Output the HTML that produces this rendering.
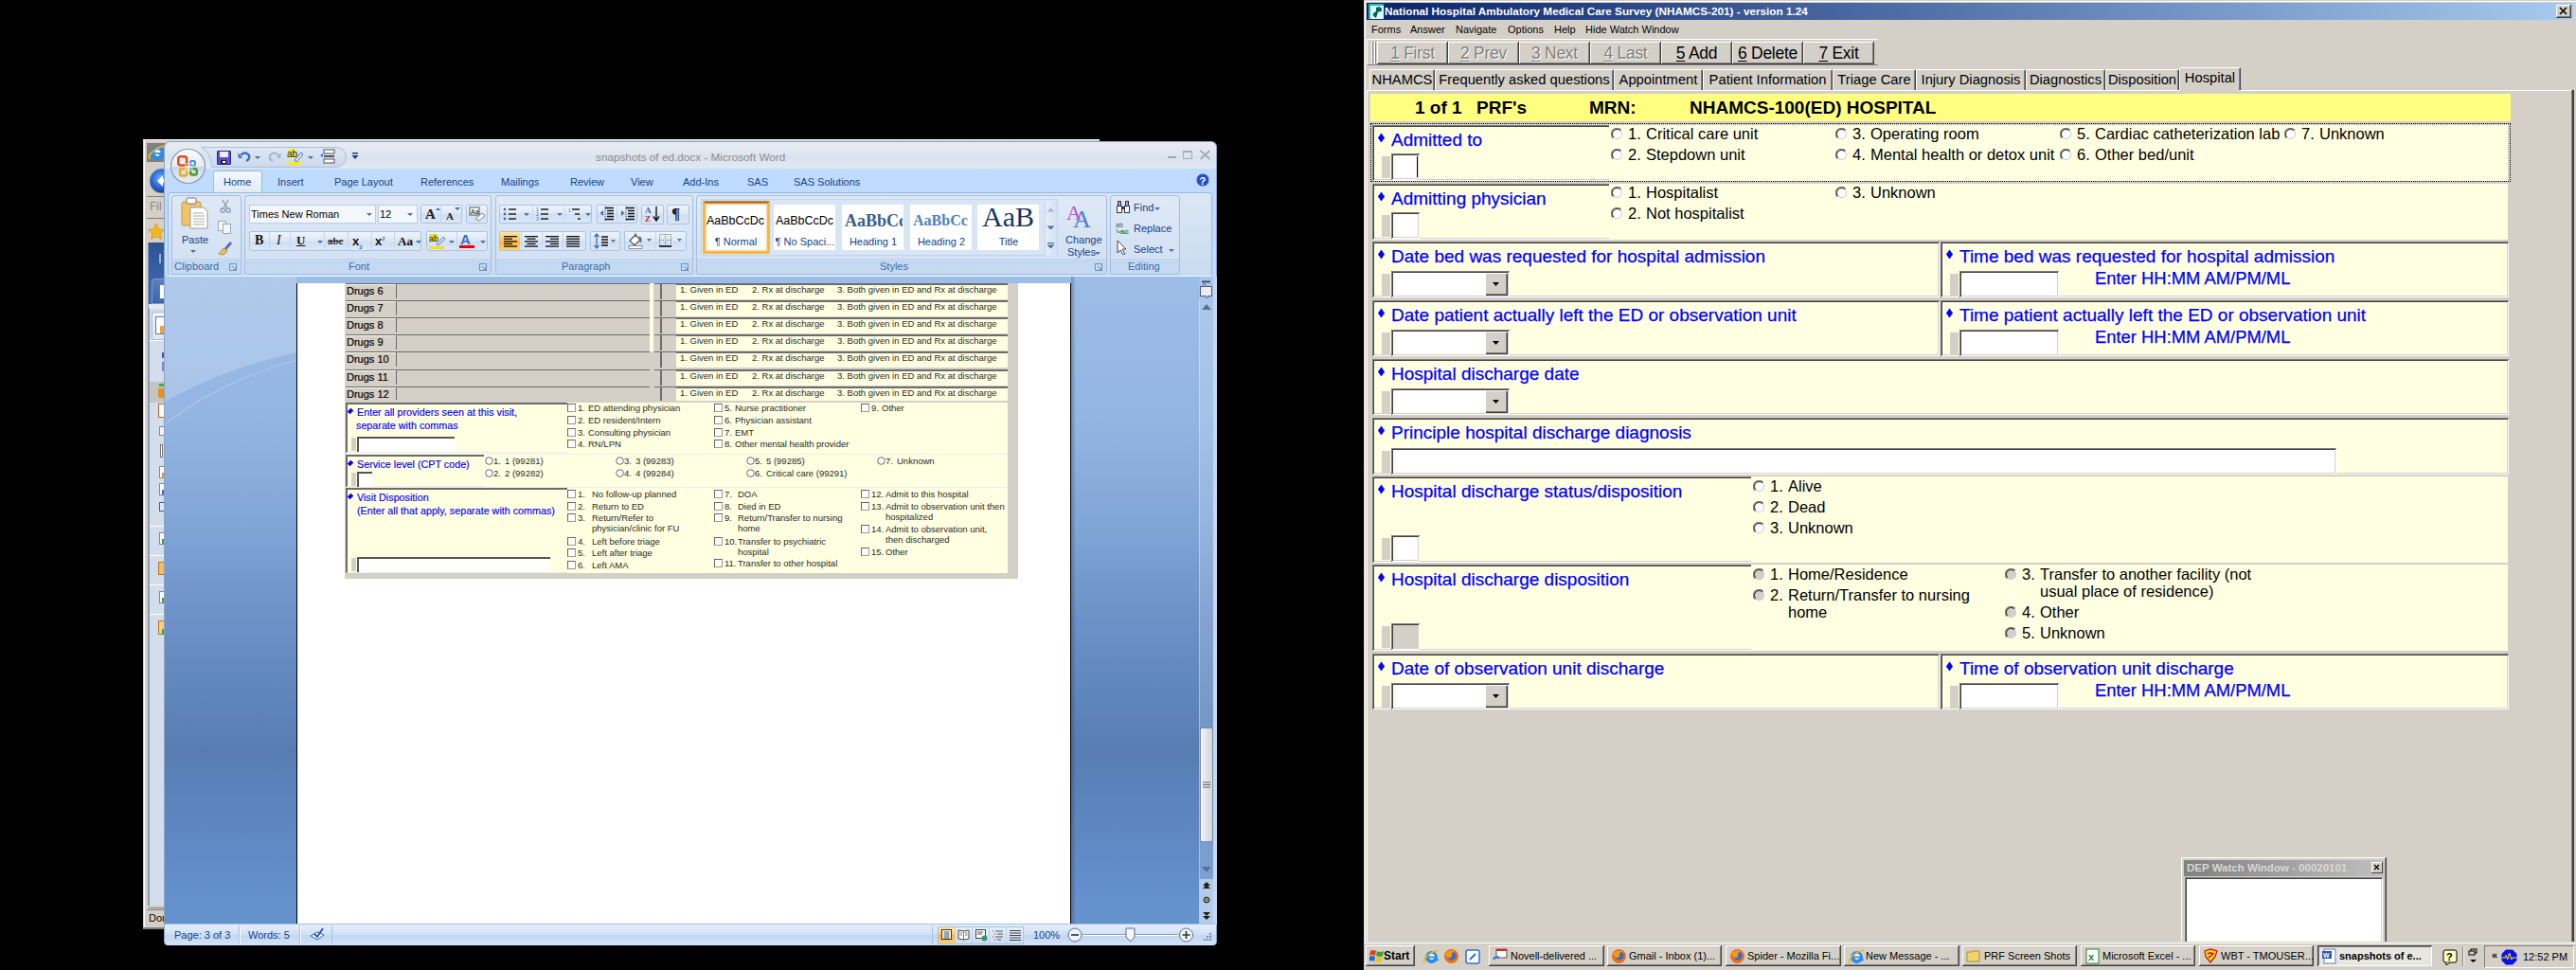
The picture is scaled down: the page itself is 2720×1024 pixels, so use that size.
<!DOCTYPE html><html><head><meta charset="utf-8"><style>
*{margin:0;padding:0}
html,body{width:2720px;height:1024px;overflow:hidden;background:#000}
body{position:relative;font-family:"Liberation Sans",sans-serif}
div,svg{position:absolute}
.t{white-space:nowrap;line-height:1}
.tt{white-space:nowrap;line-height:1;color:#fff;font-weight:bold;font-size:11.75px}
.mn{white-space:nowrap;line-height:1;color:#000;font-size:11px}
.bt{white-space:nowrap;line-height:1;font-size:17.5px;letter-spacing:-0.3px;text-align:center}
.bt u{text-decoration:underline;text-underline-offset:2px}
.tb{white-space:nowrap;line-height:1;font-size:14.75px;text-align:center;color:#000}
.hd{white-space:nowrap;line-height:1;font-size:19px;font-weight:bold;color:#000}
.lb{white-space:nowrap;line-height:1;font-size:19px;color:#0000ff;-webkit-text-stroke:0.25px #0000ff}
.o{white-space:nowrap;line-height:1;font-size:16.5px;color:#000}
.dia{width:5px;height:5px;background:#0000ff;transform:scaleY(1.4) rotate(45deg)}
.tw{white-space:nowrap;line-height:1;font-size:11.5px;font-weight:bold;color:#d8d8d8}
.st{white-space:nowrap;line-height:1;font-size:12px;font-weight:bold;color:#000}
.tk{white-space:nowrap;line-height:1;font-size:11px;color:#000}
.tk.b{font-weight:bold}

.wt{white-space:nowrap;line-height:1;font-size:11px;color:#15428b}
.wtab{white-space:nowrap;line-height:1;font-size:11px;color:#15428b}
.wlab{white-space:nowrap;line-height:1;font-size:11px;color:#3e6aaa}
.wttl{white-space:nowrap;line-height:1;font-size:11.75px;color:#8d8d8d}
.grp{border:1px solid #a3bde3;border-radius:3px;box-sizing:border-box;background:linear-gradient(#dfe9f6,#d3e1f3 81%,#c2d8f1 81%,#c6daf2)}
.bgrp{border:1px solid #a9c3e6;border-radius:2px;box-sizing:border-box;background:linear-gradient(#eef4fb,#dbe7f5 50%,#cfdef1 50%,#dce8f7)}
.dd{width:0;height:0;border-left:3px solid transparent;border-right:3px solid transparent;border-top:3px solid #4c6fa8}
.dt{white-space:nowrap;line-height:1;color:#000}
.dl{white-space:nowrap;line-height:1;color:#0000ff;font-size:10.75px;-webkit-text-stroke:0.15px #0000ff}
.dop{white-space:nowrap;line-height:1;color:#2a2a2a;font-size:9.5px}
.cb{width:9px;height:9px;box-sizing:border-box;border:1px solid;border-color:#666 #999 #999 #666;background:#fff}
</style></head><body>
<div style="left:151px;top:147px;width:30px;height:834px;background:#d4d0c8;"></div>
<div style="left:151px;top:147px;width:1010px;height:1px;background:#fff;"></div>
<div style="left:151px;top:148px;width:1010px;height:1px;background:#d4d0c8;"></div>
<div style="left:152px;top:148px;width:1px;height:832px;background:#fff;"></div>
<div style="left:151px;top:979px;width:30px;height:2px;background:#808080;"></div>
<div style="left:155px;top:151px;width:20px;height:20px;background:#808080;"></div>
<svg style="left:156px;top:152px;" width="19" height="19" viewBox="0 0 19 19"><circle cx="10" cy="10" r="7" fill="#2a8cea"/><circle cx="10.5" cy="9.5" r="3.2" fill="#fff"/><rect x="7" y="9" width="9" height="1.8" fill="#2a8cea"/><rect x="12" y="11" width="6" height="3" fill="#2a8cea"/><path d="M2 16 Q0 11 8 6 Q16 1 18 3" fill="none" stroke="#f0b420" stroke-width="1.8"/></svg>
<svg style="left:157px;top:176px;" width="20" height="30" viewBox="0 0 20 30"><defs><radialGradient id="bk" cx="45%" cy="40%" r="60%"><stop offset="0" stop-color="#7ab4ff"/><stop offset="0.6" stop-color="#2a66d8"/><stop offset="1" stop-color="#123c9a"/></radialGradient></defs><circle cx="14" cy="15" r="13" fill="url(#bk)" stroke="#9aa" stroke-width="0.8"/><path d="M9 15 L15 9 V13 H20 V17 H15 V21Z" fill="#fff"/></svg>
<div style="left:155px;top:207px;width:20px;height:1px;background:#808080;"></div>
<div class="t" style="left:158px;top:212px;font-size:12px;color:#888;">Fil</div>
<div style="left:155px;top:230px;width:20px;height:1px;background:#808080;"></div>
<svg style="left:156px;top:235px;" width="18" height="20" viewBox="0 0 18 20"><path d="M9 1 L11.5 7 L17.5 7.5 L13 11.5 L14.5 17.5 L9 14.5 L3.5 17.5 L5 11.5 L0.5 7.5 L6.5 7Z" fill="#f5b81c" stroke="#c98a00" stroke-width="0.6"/></svg>
<div style="left:156px;top:256px;width:17px;height:700px;background:#d3deec;border-left:2px solid #8a9ab4;box-sizing:border-box;"></div>
<div style="left:157px;top:256px;width:16px;height:65px;background:linear-gradient(#2d5394,#416db6);"></div>
<div style="left:168px;top:268px;width:2px;height:10px;background:#9fb2d2;"></div>
<div style="left:160px;top:294px;width:13px;height:27px;background:linear-gradient(#5a80c0,#3c66ac);border:1px solid #7d9ccc;border-right:none;border-radius:4px 0 0 0;box-sizing:border-box;"></div>
<div style="left:168px;top:300px;width:5px;height:16px;background:#fff;border:1px solid #5a7ab0;border-right:none;box-sizing:border-box;"></div>
<div style="left:157px;top:321px;width:16px;height:5px;background:#e6eaf0;"></div>
<div style="left:160px;top:329px;width:13px;height:30px;background:linear-gradient(#eef3f9,#dfe7f2);border:1px solid #a9bcd8;border-right:none;border-radius:4px 0 0 0;box-sizing:border-box;"></div>
<div style="left:164px;top:334px;width:9px;height:19px;background:#fff;border:1px solid #5a7ab0;border-right:none;box-sizing:border-box;"></div>
<div style="left:169px;top:344px;width:4px;height:8px;background:#f0a040;"></div>
<div style="left:158px;top:359px;width:15px;height:1px;background:#fff;"></div>
<div style="left:171px;top:372px;width:2px;height:6px;background:#4a5aa0;"></div>
<div style="left:171px;top:382px;width:2px;height:10px;background:#8a8ab0;"></div>
<div style="left:158px;top:403px;width:15px;height:22px;background:#c4c4c4;"></div>
<div style="left:168px;top:405px;width:5px;height:3px;background:#40b040;"></div>
<div style="left:167px;top:410px;width:6px;height:10px;background:#e89020;"></div>
<div style="left:167px;top:426px;width:6px;height:15px;background:#fff;border:1px solid #d06020;border-right:none;box-sizing:border-box;"></div>
<div style="left:168px;top:450px;width:5px;height:10px;background:#f4f4f4;border:1px solid #888;border-right:none;box-sizing:border-box;"></div>
<div style="left:169px;top:469px;width:3px;height:14px;background:#fff;border:1px solid #777;box-sizing:border-box;"></div>
<div style="left:168px;top:492px;width:5px;height:13px;background:#fff;border:1px solid #888;border-right:none;box-sizing:border-box;"></div>
<div style="left:171px;top:499px;width:2px;height:6px;background:#e89040;"></div>
<div style="left:168px;top:510px;width:5px;height:13px;background:#fff;border:1px solid #888;border-right:none;box-sizing:border-box;"></div>
<div style="left:171px;top:517px;width:2px;height:6px;background:#3a70c0;"></div>
<div style="left:168px;top:562px;width:5px;height:13px;background:#fff;border:1px solid #888;border-right:none;box-sizing:border-box;"></div>
<div style="left:171px;top:569px;width:2px;height:6px;background:#40a040;"></div>
<div style="left:168px;top:624px;width:5px;height:13px;background:#fff;border:1px solid #888;border-right:none;box-sizing:border-box;"></div>
<div style="left:171px;top:631px;width:2px;height:6px;background:#40a040;"></div>
<div style="left:168px;top:530px;width:5px;height:10px;background:#e0e8f0;border:1px solid #557;border-right:none;box-sizing:border-box;"></div>
<div style="left:158px;top:555px;width:15px;height:1px;background:#fff;"></div>
<div style="left:158px;top:586px;width:15px;height:1px;background:#fff;"></div>
<div style="left:158px;top:617px;width:15px;height:1px;background:#fff;"></div>
<div style="left:158px;top:648px;width:15px;height:1px;background:#fff;"></div>
<div style="left:167px;top:593px;width:6px;height:14px;background:#f5c060;border:1px solid #c07020;border-right:none;box-sizing:border-box;"></div>
<div style="left:167px;top:655px;width:6px;height:15px;background:#f5d080;border:1px solid #c07020;border-right:none;box-sizing:border-box;"></div>
<div style="left:171px;top:664px;width:2px;height:6px;background:#40a040;"></div>
<div style="left:157px;top:958px;width:16px;height:1px;background:#808080;"></div>
<div style="left:155px;top:960px;width:18px;height:18px;background:#d4d0c8;border-top:1px solid #808080;box-sizing:border-box;"></div>
<div class="t" style="left:157px;top:964px;font-size:11px;color:#000;">Dor</div>
<div style="left:173px;top:149px;width:1112px;height:849px;background:#bfdbff;border-radius:6px 6px 4px 4px;border:1px solid #8aa4c8;box-sizing:border-box;"></div>
<div style="left:174px;top:150px;width:1110px;height:28px;background:linear-gradient(#e7ecf3,#dfe6f0 45%,#d9e2ee 55%,#e3e9f2);border-radius:6px 6px 0 0;"></div>
<svg style="left:208px;top:154px;" width="164" height="25" viewBox="0 0 164 25"><defs><linearGradient id="qp" x1="0" y1="0" x2="0" y2="1"><stop offset="0" stop-color="#dfe7f3"/><stop offset="1" stop-color="#cbd9ec"/></linearGradient></defs><path d="M4.5 1.5 H147 A10.5 10.5 0 0 1 147 22.5 H15.5 Q15 7 4.5 1.5 Z" fill="url(#qp)" stroke="#a9bfdc" stroke-width="1"/></svg>
<svg style="left:229px;top:159px;" width="15" height="15" viewBox="0 0 15 15"><rect x="0.5" y="0.5" width="14" height="14" rx="0.5" fill="#5a4fc8" stroke="#2a2a8a"/><rect x="3" y="1" width="9" height="6" fill="#eef"/><rect x="4" y="10" width="6" height="4" fill="#222"/><rect x="6" y="11" width="3" height="2" fill="#fff"/></svg>
<svg style="left:251px;top:158px;" width="14" height="14" viewBox="0 0 14 14"><path d="M3 6 Q8 1 12 6 Q13 10 9 12" fill="none" stroke="#3b6cc8" stroke-width="2.4"/><path d="M0 3 L5 9 L1 9Z" fill="#3b6cc8"/></svg>
<div class="dd" style="left:269px;top:165px;width:0px;height:0px;"></div>
<svg style="left:283px;top:158px;" width="14" height="14" viewBox="0 0 14 14"><path d="M11 6 Q6 1 2 6 Q1 10 5 12" fill="none" stroke="#a8b4c8" stroke-width="2.2"/><path d="M14 3 L9 9 L13 9Z" fill="#a8b4c8"/></svg>
<svg style="left:303px;top:157px;" width="18" height="18" viewBox="0 0 18 18"><rect x="0" y="0" width="10" height="10" fill="#f4ee60"/><text x="0" y="9" font-size="10" font-family="Liberation Sans" fill="#111">ab</text><path d="M8 12 L15 4 L17 6 L10 14Z" fill="#e8ecf4" stroke="#3b5ea8" stroke-width="0.9"/><rect x="0" y="14" width="15" height="3" fill="#f8f000"/></svg>
<div class="dd" style="left:325px;top:165px;width:0px;height:0px;"></div>
<svg style="left:337px;top:157px;" width="18" height="16" viewBox="0 0 18 16"><path d="M1 7 L4 5 V9Z" fill="#3b6cc8"/><rect x="5" y="1" width="11" height="4" fill="#fff" stroke="#555"/><rect x="5" y="7" width="11" height="2" fill="#555"/><rect x="5" y="11" width="11" height="4" fill="#fff" stroke="#555"/></svg>
<svg style="left:371px;top:160px;" width="9" height="10" viewBox="0 0 9 10"><rect x="1" y="1" width="6" height="1.5" fill="#1d3a8a"/><path d="M0.5 4 H7.5 L4 8Z" fill="#1d3a8a"/></svg>
<div class="wttl" style="left:629px;top:160px;">snapshots of ed.docx - Microsoft Word</div>
<div style="left:1233px;top:165px;width:9px;height:2px;background:#a4abb6;"></div>
<div style="left:1249px;top:159px;width:10px;height:9px;border:1px solid #a4abb6;border-top-width:2px;box-sizing:border-box;"></div>
<svg style="left:1266px;top:158px;" width="13" height="11" viewBox="0 0 13 11"><path d="M1.5 1 L11.5 10 M11.5 1 L1.5 10" stroke="#a4abb6" stroke-width="1.8"/></svg>
<div style="left:174px;top:178px;width:1110px;height:25px;background:#bfdbff;"></div>
<div style="left:225px;top:180px;width:52px;height:23px;background:linear-gradient(#f4f8fd,#e0ebf8);border:1px solid #9ebbe0;border-bottom:none;border-radius:3px 3px 0 0;box-sizing:border-box;"></div>
<div class="wtab" style="left:236px;top:187px;">Home</div>
<div class="wtab" style="left:293px;top:187px;">Insert</div>
<div class="wtab" style="left:353px;top:187px;">Page Layout</div>
<div class="wtab" style="left:444px;top:187px;">References</div>
<div class="wtab" style="left:529px;top:187px;">Mailings</div>
<div class="wtab" style="left:602px;top:187px;">Review</div>
<div class="wtab" style="left:666px;top:187px;">View</div>
<div class="wtab" style="left:721px;top:187px;">Add-Ins</div>
<div class="wtab" style="left:789px;top:187px;">SAS</div>
<div class="wtab" style="left:838px;top:187px;">SAS Solutions</div>
<svg style="left:179px;top:156px;" width="40" height="40" viewBox="0 0 40 40"><defs><linearGradient id="ob" x1="0" y1="0" x2="0" y2="1"><stop offset="0" stop-color="#fdfdfe"/><stop offset="0.5" stop-color="#e6ebf2"/><stop offset="0.52" stop-color="#cdd7e5"/><stop offset="1" stop-color="#e8eef6"/></linearGradient></defs><circle cx="19.5" cy="19.5" r="18" fill="url(#ob)" stroke="#8d9ab0" stroke-width="1.2"/><rect x="9.3" y="9.3" width="8.8" height="9.2" rx="2.5" fill="none" stroke="#e0521a" stroke-width="2.6"/><rect x="22" y="13.8" width="5" height="5" rx="1.5" fill="none" stroke="#3a8ae0" stroke-width="1.8"/><rect x="11" y="22.2" width="7.2" height="7.3" rx="2" fill="none" stroke="#f4a81a" stroke-width="2.4"/><rect x="22.2" y="22.2" width="6.6" height="6.3" rx="2" fill="none" stroke="#4f9a2a" stroke-width="2.4"/><rect x="16.5" y="16.5" width="8" height="8" fill="#e3e9f2"/><circle cx="18.5" cy="18.2" r="1.1" fill="#e2541c"/><circle cx="22.6" cy="18.2" r="1.1" fill="#3a82e0"/><circle cx="18.5" cy="22.4" r="1.1" fill="#f4a81a"/><circle cx="22.6" cy="22.4" r="1.1" fill="#4f9a2a"/></svg>
<svg style="left:1262px;top:182px;" width="16" height="16" viewBox="0 0 16 16"><circle cx="8" cy="8" r="7" fill="#2550c8" stroke="#c8d8f0" stroke-width="1"/><text x="4.5" y="12.5" font-size="11" font-weight="bold" font-family="Liberation Sans" fill="#fff">?</text></svg>
<div style="left:177px;top:203px;width:1103px;height:89px;background:linear-gradient(#dbe7f5,#c9dbf0);border:1px solid #9ab8e0;border-radius:3px;box-sizing:border-box;"></div>
<div style="left:177px;top:291px;width:1103px;height:1px;background:#e6f6ff;"></div>
<div class="grp" style="left:181px;top:206px;width:74px;height:84px;"></div>
<div class="wlab" style="left:184px;top:276px;">Clipboard</div>
<svg style="left:242px;top:278px;" width="8" height="8" viewBox="0 0 8 8"><rect x="0.5" y="0.5" width="7" height="7" fill="none" stroke="#6e8fc0"/><path d="M3 3 L7 7 M4 7 H7 V4" stroke="#6e8fc0" fill="none"/></svg>
<div class="grp" style="left:258px;top:206px;width:261px;height:84px;"></div>
<div class="wlab" style="left:368px;top:276px;">Font</div>
<svg style="left:506px;top:278px;" width="8" height="8" viewBox="0 0 8 8"><rect x="0.5" y="0.5" width="7" height="7" fill="none" stroke="#6e8fc0"/><path d="M3 3 L7 7 M4 7 H7 V4" stroke="#6e8fc0" fill="none"/></svg>
<div class="grp" style="left:523px;top:206px;width:209px;height:84px;"></div>
<div class="wlab" style="left:593px;top:276px;">Paragraph</div>
<svg style="left:719px;top:278px;" width="8" height="8" viewBox="0 0 8 8"><rect x="0.5" y="0.5" width="7" height="7" fill="none" stroke="#6e8fc0"/><path d="M3 3 L7 7 M4 7 H7 V4" stroke="#6e8fc0" fill="none"/></svg>
<div class="grp" style="left:735px;top:206px;width:434px;height:84px;"></div>
<div class="wlab" style="left:929px;top:276px;">Styles</div>
<svg style="left:1156px;top:278px;" width="8" height="8" viewBox="0 0 8 8"><rect x="0.5" y="0.5" width="7" height="7" fill="none" stroke="#6e8fc0"/><path d="M3 3 L7 7 M4 7 H7 V4" stroke="#6e8fc0" fill="none"/></svg>
<div class="grp" style="left:1172px;top:206px;width:74px;height:84px;"></div>
<div class="wlab" style="left:1191px;top:276px;">Editing</div>
<svg style="left:191px;top:208px;" width="30" height="34" viewBox="0 0 30 34"><rect x="1" y="5" width="20" height="25" rx="2" fill="#f1c36a" stroke="#c8963a"/><rect x="6" y="1" width="10" height="6" rx="1" fill="#fff" stroke="#777"/><path d="M10 11 H24 L28 15 V33 H10Z" fill="#fff" stroke="#999"/><path d="M13 17H24M13 20H25M13 23H25M13 26H25M13 29H25" stroke="#aaa"/></svg>
<div class="wtab" style="left:192px;top:248px;">Paste</div>
<div class="dd" style="left:201px;top:264px;width:0px;height:0px;"></div>
<svg style="left:232px;top:210px;" width="12" height="15" viewBox="0 0 12 15"><circle cx="3" cy="12" r="2.2" fill="none" stroke="#8898b0" stroke-width="1.3"/><circle cx="9" cy="12" r="2.2" fill="none" stroke="#8898b0" stroke-width="1.3"/><path d="M4 10 L9 1 M8 10 L3 1" stroke="#8898b0" stroke-width="1.2"/></svg>
<svg style="left:230px;top:233px;" width="15" height="14" viewBox="0 0 15 14"><rect x="0.5" y="0.5" width="8" height="10" fill="#f4f6fa" stroke="#9aa8bc"/><rect x="5.5" y="3.5" width="8" height="10" fill="#f4f6fa" stroke="#9aa8bc"/></svg>
<svg style="left:229px;top:253px;" width="17" height="17" viewBox="0 0 17 17"><path d="M2 15 L7 9 L11 12 L7 16Z" fill="#e8c060" stroke="#a08020" stroke-width="0.8"/><path d="M8 9 L14 2 L16 4 L10 11Z" fill="#6a60b0"/></svg>
<div style="left:263px;top:216px;width:134px;height:20px;background:#f3f7fc;border:1px solid #b9cce6;box-sizing:border-box;"></div>
<div class="t" style="left:265px;top:221px;font-size:11px;color:#000;">Times New Roman</div>
<div class="dd" style="left:387px;top:225px;width:0px;height:0px;"></div>
<div style="left:399px;top:216px;width:42px;height:20px;background:#f3f7fc;border:1px solid #b9cce6;box-sizing:border-box;"></div>
<div class="t" style="left:401px;top:221px;font-size:11px;color:#000;">12</div>
<div class="dd" style="left:430px;top:225px;width:0px;height:0px;"></div>
<div class="bgrp" style="left:444px;top:216px;width:44px;height:20px;"></div>
<div style="left:465px;top:216px;width:1px;height:20px;background:#c5d6ec;"></div>
<div class="t" style="left:449px;top:219px;font-family:Liberation Serif;font-weight:bold;font-size:15px;color:#222;">A</div>
<svg style="left:460px;top:219px;" width="5" height="4" viewBox="0 0 5 4"><path d="M0 3H5L2.5 0Z" fill="#3b6cc8"/></svg>
<div class="t" style="left:471px;top:223px;font-family:Liberation Serif;font-weight:bold;font-size:11px;color:#222;">A</div>
<svg style="left:480px;top:219px;" width="6" height="4" viewBox="0 0 6 4"><path d="M0 0H6L3 3Z" fill="#3b6cc8"/></svg>
<div class="bgrp" style="left:492px;top:216px;width:23px;height:20px;"></div>
<svg style="left:495px;top:218px;" width="18" height="16" viewBox="0 0 18 16"><rect x="1" y="1" width="10" height="8" fill="#fff" stroke="#555"/><text x="2" y="8" font-size="7" font-family="Liberation Sans" fill="#000">Aa</text><path d="M7 13 L14 7 L17 10 L11 15Z" fill="#f4f4f4" stroke="#888"/></svg>
<div class="bgrp" style="left:263px;top:244px;width:182px;height:21px;"></div>
<div style="left:284px;top:245px;width:1px;height:19px;background:#c5d6ec;"></div>
<div style="left:306px;top:245px;width:1px;height:19px;background:#c5d6ec;"></div>
<div style="left:342px;top:245px;width:1px;height:19px;background:#c5d6ec;"></div>
<div style="left:367px;top:245px;width:1px;height:19px;background:#c5d6ec;"></div>
<div style="left:392px;top:245px;width:1px;height:19px;background:#c5d6ec;"></div>
<div style="left:416px;top:245px;width:1px;height:19px;background:#c5d6ec;"></div>
<div class="t" style="left:269px;top:247px;font-family:Liberation Serif;font-weight:bold;font-size:14px;color:#111;">B</div>
<div class="t" style="left:292px;top:247px;font-family:Liberation Serif;font-style:italic;font-size:14px;color:#111;">I</div>
<div class="t" style="left:313px;top:247px;font-family:Liberation Serif;font-weight:bold;font-size:13px;color:#111;text-decoration:underline;">U</div>
<div class="dd" style="left:335px;top:254px;width:0px;height:0px;"></div>
<div class="t" style="left:346px;top:249px;font-family:Liberation Serif;font-weight:bold;font-size:11px;color:#333;text-decoration:line-through;">abc</div>
<div class="t" style="left:372px;top:248px;font-family:Liberation Sans;font-weight:bold;font-size:13px;color:#111;">x<sub style="font-size:6px;color:#3b6cc8">2</sub></div>
<div class="t" style="left:396px;top:248px;font-family:Liberation Sans;font-weight:bold;font-size:13px;color:#111;">x<sup style="font-size:6px;color:#3b6cc8">2</sup></div>
<div class="t" style="left:420px;top:248px;font-family:Liberation Serif;font-weight:bold;font-size:13px;color:#111;">Aa</div>
<div class="dd" style="left:439px;top:254px;width:0px;height:0px;"></div>
<div class="bgrp" style="left:450px;top:244px;width:65px;height:21px;"></div>
<div style="left:482px;top:245px;width:1px;height:19px;background:#c5d6ec;"></div>
<svg style="left:453px;top:247px;" width="18" height="16" viewBox="0 0 18 16"><rect x="0" y="0" width="9" height="8" fill="#f0e020"/><text x="0" y="8" font-size="9" font-family="Liberation Sans" fill="#222">ab</text><path d="M8 11 L15 3 L17 5 L10 12Z" fill="#dde" stroke="#3b6cc8" stroke-width="0.8"/><rect x="0" y="13" width="16" height="3" fill="#f0e020"/></svg>
<div class="dd" style="left:474px;top:254px;width:0px;height:0px;"></div>
<div class="t" style="left:486px;top:245px;font-family:Liberation Sans;font-weight:bold;font-size:15px;color:#3b6cc8;">A</div>
<div style="left:485px;top:259px;width:16px;height:3px;background:#e00;"></div>
<div class="dd" style="left:507px;top:254px;width:0px;height:0px;"></div>
<div class="bgrp" style="left:527px;top:216px;width:98px;height:20px;"></div>
<div style="left:562px;top:216px;width:1px;height:20px;background:#c5d6ec;"></div>
<div style="left:596px;top:216px;width:1px;height:20px;background:#c5d6ec;"></div>
<svg style="left:531px;top:219px;" width="20" height="14" viewBox="0 0 20 14"><circle cx="2" cy="2" r="1.4" fill="#3b6cc8"/><circle cx="2" cy="7" r="1.4" fill="#3b6cc8"/><circle cx="2" cy="12" r="1.4" fill="#3b6cc8"/><path d="M6 2H14M6 7H14M6 12H14" stroke="#222" stroke-width="1.3"/></svg>
<div class="dd" style="left:553px;top:225px;width:0px;height:0px;"></div>
<svg style="left:566px;top:219px;" width="20" height="14" viewBox="0 0 20 14"><text x="0" y="4" font-size="5" fill="#3b6cc8" font-family="Liberation Sans">1</text><text x="0" y="9" font-size="5" fill="#3b6cc8" font-family="Liberation Sans">2</text><text x="0" y="14" font-size="5" fill="#3b6cc8" font-family="Liberation Sans">3</text><path d="M5 2H13M5 7H13M5 12H13" stroke="#222" stroke-width="1.3"/></svg>
<div class="dd" style="left:588px;top:225px;width:0px;height:0px;"></div>
<svg style="left:600px;top:219px;" width="20" height="14" viewBox="0 0 20 14"><path d="M4 2H12M7 7H12M10 12H13" stroke="#222" stroke-width="1.3"/><text x="0" y="5" font-size="5" fill="#3b6cc8" font-family="Liberation Sans">1</text></svg>
<div class="dd" style="left:618px;top:225px;width:0px;height:0px;"></div>
<div class="bgrp" style="left:630px;top:216px;width:43px;height:20px;"></div>
<div style="left:651px;top:216px;width:1px;height:20px;background:#c5d6ec;"></div>
<svg style="left:633px;top:218px;" width="17" height="16" viewBox="0 0 17 16"><path d="M0.5 7 L4 4 V10Z" fill="#3b6cc8"/><path d="M6 1.5H15M8 4.5H15M8 7.5H15M8 10.5H15M6 13.5H15" stroke="#111" stroke-width="1.6"/><path d="M6 0V16" stroke="#111" stroke-width="0.8" stroke-dasharray="1 1"/></svg>
<svg style="left:655px;top:218px;" width="17" height="16" viewBox="0 0 17 16"><path d="M4.5 7 L1 4 V10Z" fill="#3b6cc8"/><path d="M6 1.5H15M8 4.5H15M8 7.5H15M8 10.5H15M6 13.5H15" stroke="#111" stroke-width="1.6"/><path d="M6 0V16" stroke="#111" stroke-width="0.8" stroke-dasharray="1 1"/></svg>
<div class="bgrp" style="left:677px;top:216px;width:24px;height:21px;"></div>
<svg style="left:680px;top:217px;" width="18" height="18" viewBox="0 0 18 18"><text x="1" y="8" font-size="9" font-weight="bold" fill="#2a5ac8" font-family="Liberation Serif">A</text><text x="1" y="17" font-size="9" font-weight="bold" fill="#b83030" font-family="Liberation Serif">Z</text><path d="M13 1V15M10 11.5L13 16L16 11.5" stroke="#111" stroke-width="1.4" fill="none"/></svg>
<div class="bgrp" style="left:704px;top:216px;width:24px;height:21px;"></div>
<div class="t" style="left:709px;top:217px;font-family:Liberation Serif;font-size:17px;font-weight:bold;color:#222;">&para;</div>
<div class="bgrp" style="left:527px;top:244px;width:92px;height:21px;"></div>
<div style="left:528px;top:245px;width:21px;height:19px;background:linear-gradient(#ffe6a0,#ffc45a 50%,#ffb030 50%,#ffd27a);"></div>
<svg style="left:531px;top:247px;" width="16" height="15" viewBox="0 0 16 15"><rect x="1" y="2.0" width="14" height="1.3" fill="#111"/><rect x="1" y="4.6" width="9" height="1.3" fill="#111"/><rect x="1" y="7.2" width="14" height="1.3" fill="#111"/><rect x="1" y="9.8" width="9" height="1.3" fill="#111"/><rect x="1" y="12.4" width="14" height="1.3" fill="#111"/></svg>
<div style="left:550px;top:245px;width:1px;height:19px;background:#c5d6ec;"></div>
<svg style="left:553px;top:247px;" width="16" height="15" viewBox="0 0 16 15"><rect x="1.0" y="2.0" width="14" height="1.3" fill="#111"/><rect x="3.5" y="4.6" width="9" height="1.3" fill="#111"/><rect x="1.0" y="7.2" width="14" height="1.3" fill="#111"/><rect x="3.5" y="9.8" width="9" height="1.3" fill="#111"/><rect x="1.0" y="12.4" width="14" height="1.3" fill="#111"/></svg>
<div style="left:572px;top:245px;width:1px;height:19px;background:#c5d6ec;"></div>
<svg style="left:575px;top:247px;" width="16" height="15" viewBox="0 0 16 15"><rect x="1" y="2.0" width="14" height="1.3" fill="#111"/><rect x="6" y="4.6" width="9" height="1.3" fill="#111"/><rect x="1" y="7.2" width="14" height="1.3" fill="#111"/><rect x="6" y="9.8" width="9" height="1.3" fill="#111"/><rect x="1" y="12.4" width="14" height="1.3" fill="#111"/></svg>
<div style="left:594px;top:245px;width:1px;height:19px;background:#c5d6ec;"></div>
<svg style="left:597px;top:247px;" width="16" height="15" viewBox="0 0 16 15"><rect x="1" y="2.0" width="14" height="1.3" fill="#111"/><rect x="1" y="4.6" width="14" height="1.3" fill="#111"/><rect x="1" y="7.2" width="14" height="1.3" fill="#111"/><rect x="1" y="9.8" width="14" height="1.3" fill="#111"/><rect x="1" y="12.4" width="14" height="1.3" fill="#111"/></svg>
<div class="bgrp" style="left:623px;top:244px;width:32px;height:21px;"></div>
<svg style="left:626px;top:246px;" width="26" height="17" viewBox="0 0 26 17"><path d="M4 1.5V15.5M1.5 4L4 1L6.5 4M1.5 13L4 16L6.5 13" stroke="#3b6cc8" stroke-width="1.3" fill="none"/><path d="M9 4H16M9 7H16M9 10H16M9 13H16" stroke="#111" stroke-width="1.3"/><path d="M19 7H24L21.5 10Z" fill="#4c6fa8"/></svg>
<div class="bgrp" style="left:659px;top:244px;width:66px;height:21px;"></div>
<div style="left:692px;top:245px;width:1px;height:19px;background:#c5d6ec;"></div>
<svg style="left:662px;top:245px;" width="28" height="18" viewBox="0 0 28 18"><path d="M3 9 L9 3 L14 8 L8 14Z" fill="#fff" stroke="#444" stroke-width="1.1"/><path d="M9 1V5" stroke="#444"/><path d="M13 5 Q16 7 14 11" stroke="#3b6cc8" stroke-width="1.6" fill="none"/><rect x="2" y="14.5" width="14" height="3" fill="#fff" stroke="#777" stroke-width="0.8"/><path d="M21 7H26L23.5 10Z" fill="#4c6fa8"/></svg>
<svg style="left:695px;top:246px;" width="28" height="16" viewBox="0 0 28 16"><rect x="1.5" y="1.5" width="12" height="12" fill="none" stroke="#777" stroke-dasharray="1 1"/><path d="M7.5 1V14M1 7.5H14" stroke="#777" stroke-dasharray="1 1"/><path d="M1 14H14" stroke="#111" stroke-width="1.6"/><path d="M20 6H25L22.5 9Z" fill="#4c6fa8"/></svg>
<div style="left:740px;top:210px;width:377px;height:60px;background:#d8e5f5;border:1px solid #c2d5ee;box-sizing:border-box;"></div>
<div style="left:817px;top:216px;width:65px;height:48px;background:#fff;"></div>
<div style="left:889px;top:216px;width:65px;height:48px;background:#fff;"></div>
<div style="left:961px;top:216px;width:65px;height:48px;background:#fff;"></div>
<div style="left:1032px;top:216px;width:65px;height:48px;background:#fff;"></div>
<div style="left:742px;top:212px;width:71px;height:56px;background:#fff;border:3px solid #f8b848;border-top-color:#b87a40;border-radius:2px;box-shadow:inset 0 0 2px 1px #ffd890;box-sizing:border-box;"></div>
<div class="t" style="left:745px;top:227px;width:63px;overflow:hidden;text-align:center;font-family:Liberation Sans;font-size:12.5px;color:#000;">AaBbCcDc</div>
<div class="wt" style="left:743px;top:250px;width:68px;text-align:center;color:#15428b;">&para; Normal</div>
<div class="t" style="left:818px;top:227px;width:63px;overflow:hidden;text-align:center;font-family:Liberation Sans;font-size:12.5px;color:#000;">AaBbCcDc</div>
<div class="wt" style="left:816px;top:250px;width:68px;text-align:center;color:#15428b;">&para; No Spaci...</div>
<div class="t" style="left:890px;top:224px;width:63px;overflow:hidden;text-align:center;font-family:Liberation Serif;font-weight:bold;font-size:18px;color:#365f91;text-align:left;text-indent:2px;">AaBbCc</div>
<div class="wt" style="left:888px;top:250px;width:68px;text-align:center;color:#15428b;">Heading 1</div>
<div class="t" style="left:962px;top:225px;width:63px;overflow:hidden;text-align:center;font-family:Liberation Serif;font-weight:bold;font-size:16px;color:#4f81bd;text-align:left;text-indent:2px;">AaBbCc</div>
<div class="wt" style="left:960px;top:250px;width:68px;text-align:center;color:#15428b;">Heading 2</div>
<div class="t" style="left:1033px;top:214px;width:63px;overflow:hidden;text-align:center;font-family:Liberation Serif;font-size:30px;color:#17365d;">AaB</div>
<div class="wt" style="left:1031px;top:250px;width:68px;text-align:center;color:#15428b;">Title</div>
<div style="left:1103px;top:212px;width:13px;height:58px;background:linear-gradient(90deg,#e4edf8,#d3e1f3);border-left:1px solid #c5d6ec;box-sizing:border-box;"></div>
<svg style="left:1105px;top:219px;" width="9" height="5" viewBox="0 0 9 5"><path d="M0.5 4.5H8.5L4.5 0.5Z" fill="#a8b8d0"/></svg>
<svg style="left:1105px;top:238px;" width="9" height="5" viewBox="0 0 9 5"><path d="M0.5 0.5H8.5L4.5 4.5Z" fill="#4c6fa8"/></svg>
<svg style="left:1105px;top:256px;" width="9" height="7" viewBox="0 0 9 7"><rect x="1" y="0" width="7" height="1.2" fill="#4c6fa8"/><path d="M0.5 2.5H8.5L4.5 6.5Z" fill="#4c6fa8"/></svg>
<svg style="left:1125px;top:210px;" width="34" height="32" viewBox="0 0 34 32"><text x="1" y="22" font-size="22" font-family="Liberation Serif" fill="#c050c8">A</text><text x="8" y="30" font-size="26" font-family="Liberation Serif" fill="#4a7fd4">A</text></svg>
<div class="wtab" style="left:1125px;top:248px;">Change</div>
<div class="wtab" style="left:1127px;top:261px;">Styles</div>
<div class="dd" style="left:1156px;top:266px;width:0px;height:0px;"></div>
<svg style="left:1178px;top:211px;" width="16" height="14" viewBox="0 0 16 14"><rect x="1.5" y="6.5" width="5" height="7" fill="#fff" stroke="#334"/><rect x="9.5" y="6.5" width="5" height="7" fill="#fff" stroke="#334"/><rect x="2.5" y="1.5" width="3" height="5" fill="#9ab" stroke="#334"/><rect x="10.5" y="1.5" width="3" height="5" fill="#9ab" stroke="#334"/><rect x="6" y="7" width="4" height="3" fill="#334"/></svg>
<div class="wtab" style="left:1197px;top:214px;">Find</div>
<div class="dd" style="left:1219px;top:219px;width:0px;height:0px;"></div>
<svg style="left:1177px;top:233px;" width="18" height="15" viewBox="0 0 18 15"><text x="1" y="7" font-size="7" font-family="Liberation Sans" fill="#555">ab</text><text x="6" y="14" font-size="8" font-weight="bold" font-family="Liberation Sans" fill="#2a8a2a">ac</text><path d="M2 9 L4 13 L6 11" stroke="#3b6cc8" fill="none"/></svg>
<div class="wtab" style="left:1197px;top:236px;">Replace</div>
<svg style="left:1178px;top:253px;" width="14" height="16" viewBox="0 0 14 16"><path d="M2 1 L2 14 L5 11 L8 16 L10 15 L7 10 L11 10Z" fill="#fff" stroke="#333" stroke-width="0.9"/></svg>
<div class="wtab" style="left:1197px;top:258px;">Select</div>
<div class="dd" style="left:1234px;top:263px;width:0px;height:0px;"></div>
<div style="left:174px;top:292px;width:1107px;height:684px;background:linear-gradient(#9cbde6 0%,#93b5e2 22%,#7fa3d5 40%,#6e91c8 52%,#5f86bd 64%,#587db4 73%,#5e88c2 86%,#6693cf 100%);"></div>
<svg style="left:174px;top:292px;" width="139" height="200" viewBox="0 0 139 200"><path d="M0 0 H139 V80 Q60 98 0 132 Z" fill="#ffffff" fill-opacity="0.2"/><path d="M0 156 Q55 112 139 88" stroke="#ffffff" stroke-opacity="0.22" stroke-width="1.2" fill="none"/></svg>
<div style="left:1131px;top:292px;width:5px;height:684px;background:linear-gradient(90deg,rgba(30,50,90,0.35),rgba(30,50,90,0));"></div>
<div style="left:313px;top:299px;width:818px;height:677px;background:#fff;border-left:1px solid #000;border-right:1px solid #000;box-sizing:border-box;"></div>
<div style="left:1281px;top:292px;width:4px;height:684px;background:#c6d8f0;"></div>
<div style="left:1266px;top:317px;width:15px;height:611px;background:rgba(255,255,255,0.17);border-left:1px solid rgba(255,255,255,0.35);box-sizing:border-box;"></div>
<div style="left:1266px;top:292px;width:15px;height:25px;background:#a9c4ea;"></div>
<svg style="left:1267px;top:296px;" width="14" height="20" viewBox="0 0 14 20"><rect x="2" y="0.5" width="9" height="1.8" fill="#3a4a6a"/><rect x="0.5" y="6.5" width="12" height="10" fill="#efeaf2" stroke="#4a5a7a"/><path d="M3 6 L4.5 3 L6 6 M6 16 L7.5 19 L9 16" stroke="#4a5a7a" fill="#fff"/></svg>
<svg style="left:1268px;top:320px;" width="12" height="8" viewBox="0 0 12 8"><path d="M1 7 L6 1 L11 7Z" fill="#5a6f90"/></svg>
<div style="left:1267px;top:768px;width:14px;height:121px;background:linear-gradient(90deg,#f4f6f9,#dfe4ec 50%,#cdd5e0);border:1px solid #7a8aa4;border-radius:2px;box-sizing:border-box;"></div>
<svg style="left:1270px;top:825px;" width="8" height="8" viewBox="0 0 8 8"><path d="M0 1H8M0 3.5H8M0 6H8" stroke="#555" stroke-width="0.9"/></svg>
<svg style="left:1268px;top:914px;" width="12" height="8" viewBox="0 0 12 8"><path d="M1 1 L6 7 L11 1Z" fill="#5a6f90"/></svg>
<div style="left:1266px;top:928px;width:15px;height:48px;background:#b4cbea;"></div>
<svg style="left:1268px;top:930px;" width="12" height="44" viewBox="0 0 12 44"><path d="M6 1L10 5H2Z M6 4L10 8H2Z" fill="#1a1a1a"/><circle cx="6" cy="20" r="3" fill="#888" stroke="#222"/><path d="M2 33H10L6 37Z M2 37H10L6 41Z" fill="#1a1a1a"/></svg>
<div style="left:174px;top:975px;width:1110px;height:23px;background:linear-gradient(#e4eefb,#cfe0f5 50%,#c1d6f1 50%,#d4e4f8);border-top:1px solid #a5c0e5;box-sizing:border-box;border-radius:0 0 4px 4px;"></div>
<div class="wtab" style="left:184px;top:982px;color:#15428b;">Page: 3 of 3</div>
<div style="left:252px;top:977px;width:1px;height:20px;background:#a5c0e5;"></div>
<div style="left:253px;top:977px;width:1px;height:20px;background:#fff;"></div>
<div class="wtab" style="left:262px;top:982px;color:#15428b;">Words: 5</div>
<div style="left:316px;top:977px;width:1px;height:20px;background:#a5c0e5;"></div>
<div style="left:317px;top:977px;width:1px;height:20px;background:#fff;"></div>
<svg style="left:326px;top:978px;" width="18" height="16" viewBox="0 0 18 16"><path d="M2 10 L9 14 L16 9 L9 6Z" fill="#fff" stroke="#3b5ea0"/><path d="M6 8 L9 11 L15 2" stroke="#2a5ac8" stroke-width="2" fill="none"/></svg>
<div style="left:350px;top:977px;width:1px;height:20px;background:#a5c0e5;"></div>
<div style="left:984px;top:977px;width:1px;height:20px;background:#a5c0e5;"></div>
<div style="left:990px;top:978px;width:91px;height:19px;background:linear-gradient(#e6effa,#ccdcf2);border:1px solid #a9c3e6;box-sizing:border-box;"></div>
<div style="left:991px;top:979px;width:18px;height:17px;background:linear-gradient(#ffe6a0,#ffc45a 50%,#ffb030 50%,#ffd27a);"></div>
<svg style="left:993px;top:980px;" width="14" height="14" viewBox="0 0 14 14"><rect x="1.5" y="1.5" width="10" height="10" fill="#fff" stroke="#333"/><path d="M3.5 4H9.5M3.5 6H9.5M3.5 8H9.5M3.5 10H9.5" stroke="#333" stroke-width="0.9"/></svg>
<svg style="left:1011px;top:980px;" width="14" height="14" viewBox="0 0 14 14"><path d="M1 2 L6.5 3 L12 2 V11 L6.5 12 L1 11Z" fill="#fff" stroke="#444"/><path d="M6.5 3V12M2.5 5H5M2.5 7H5M8 5H10.5M8 7H10.5" stroke="#555" stroke-width="0.8"/></svg>
<div style="left:1008px;top:979px;width:1px;height:17px;background:#bcd0ea;"></div>
<svg style="left:1029px;top:980px;" width="14" height="14" viewBox="0 0 14 14"><rect x="1.5" y="1.5" width="10" height="9" fill="#fff" stroke="#444"/><path d="M3 4H9M3 6H8" stroke="#555"/><circle cx="10.5" cy="10.5" r="3" fill="#3a9a50"/><circle cx="10" cy="10" r="1.5" fill="#4a80d0"/></svg>
<div style="left:1026px;top:979px;width:1px;height:17px;background:#bcd0ea;"></div>
<svg style="left:1047px;top:980px;" width="14" height="14" viewBox="0 0 14 14"><path d="M4 3H12M6 6H12M4 9H12M6 12H10" stroke="#555" stroke-width="1.2"/><path d="M1 3H2M3 6H4M1 9H2M3 12H4" stroke="#555"/></svg>
<div style="left:1044px;top:979px;width:1px;height:17px;background:#bcd0ea;"></div>
<svg style="left:1065px;top:980px;" width="14" height="14" viewBox="0 0 14 14"><path d="M1 2.5H13M1 5H13M1 7.5H13M1 10H13M1 12.5H13" stroke="#444" stroke-width="1.1"/></svg>
<div style="left:1062px;top:979px;width:1px;height:17px;background:#bcd0ea;"></div>
<div class="wtab" style="left:1091px;top:982px;color:#15428b;">100%</div>
<svg style="left:1127px;top:979px;" width="16" height="16" viewBox="0 0 16 16"><circle cx="8" cy="8" r="7" fill="#eef3fb" stroke="#5a6f90"/><path d="M4 8H12" stroke="#333" stroke-width="1.6"/></svg>
<div style="left:1143px;top:986px;width:101px;height:1px;background:#8aa0c0;"></div>
<div style="left:1143px;top:987px;width:101px;height:1px;background:#fff;"></div>
<svg style="left:1188px;top:979px;" width="11" height="16" viewBox="0 0 11 16"><path d="M1 1H10V10L5.5 15L1 10Z" fill="#f4f7fc" stroke="#5a6f90"/></svg>
<svg style="left:1244px;top:979px;" width="17" height="16" viewBox="0 0 17 16"><circle cx="8.5" cy="8" r="7" fill="#eef3fb" stroke="#5a6f90"/><path d="M4.5 8H12.5M8.5 4V12" stroke="#333" stroke-width="1.6"/></svg>
<svg style="left:1268px;top:984px;" width="12" height="11" viewBox="0 0 12 11"><g fill="#7d90b0"><rect x="9" y="1" width="2" height="2"/><rect x="6" y="4" width="2" height="2"/><rect x="9" y="4" width="2" height="2"/><rect x="3" y="7" width="2" height="2"/><rect x="6" y="7" width="2" height="2"/><rect x="9" y="7" width="2" height="2"/></g></svg>
<div style="left:364px;top:299px;width:711px;height:311px;background:#d4d0c8;"></div>
<div style="left:365px;top:299px;width:53px;height:18px;background:#d4d0c8;border-top:1px solid #6c6c6c;box-shadow:inset 0 1px #f8f8e8;box-sizing:border-box;"></div>
<div class="dt" style="left:366px;top:302px;font-size:11px;-webkit-text-stroke:0.2px #000;">Drugs 6</div>
<div style="left:418px;top:299px;width:1px;height:16px;background:#6c6c6c;"></div>
<div style="left:419px;top:299px;width:267px;height:18px;background:#d4d0c8;border-top:1px solid #6c6c6c;box-sizing:border-box;"></div>
<div style="left:686px;top:299px;width:4px;height:18px;background:#ffffe1;"></div>
<div style="left:691px;top:299px;width:23px;height:18px;background:#d4d0c8;border-top:1px solid #6c6c6c;box-sizing:border-box;"></div>
<div style="left:697px;top:300px;width:2px;height:16px;background:#6c6c6c;"></div>
<div style="left:714px;top:299px;width:350px;height:17px;background:#ffffe1;border-top:2px solid #6c6c6c;box-sizing:border-box;"></div>
<div class="dop" style="left:718px;top:301px;">1. Given in ED</div>
<div class="dop" style="left:794px;top:301px;">2. Rx at discharge</div>
<div class="dop" style="left:884px;top:301px;">3. Both given in ED and Rx at discharge</div>
<div style="left:365px;top:317px;width:53px;height:18px;background:#d4d0c8;border-top:1px solid #6c6c6c;box-shadow:inset 0 1px #f8f8e8;box-sizing:border-box;"></div>
<div class="dt" style="left:366px;top:320px;font-size:11px;-webkit-text-stroke:0.2px #000;">Drugs 7</div>
<div style="left:418px;top:317px;width:1px;height:16px;background:#6c6c6c;"></div>
<div style="left:419px;top:317px;width:267px;height:18px;background:#d4d0c8;border-top:1px solid #6c6c6c;box-sizing:border-box;"></div>
<div style="left:686px;top:317px;width:4px;height:18px;background:#ffffe1;"></div>
<div style="left:691px;top:317px;width:23px;height:18px;background:#d4d0c8;border-top:1px solid #6c6c6c;box-sizing:border-box;"></div>
<div style="left:697px;top:318px;width:2px;height:16px;background:#6c6c6c;"></div>
<div style="left:714px;top:317px;width:350px;height:17px;background:#ffffe1;border-top:2px solid #6c6c6c;box-sizing:border-box;"></div>
<div class="dop" style="left:718px;top:319px;">1. Given in ED</div>
<div class="dop" style="left:794px;top:319px;">2. Rx at discharge</div>
<div class="dop" style="left:884px;top:319px;">3. Both given in ED and Rx at discharge</div>
<div style="left:365px;top:335px;width:53px;height:18px;background:#d4d0c8;border-top:1px solid #6c6c6c;box-shadow:inset 0 1px #f8f8e8;box-sizing:border-box;"></div>
<div class="dt" style="left:366px;top:338px;font-size:11px;-webkit-text-stroke:0.2px #000;">Drugs 8</div>
<div style="left:418px;top:335px;width:1px;height:16px;background:#6c6c6c;"></div>
<div style="left:419px;top:335px;width:267px;height:18px;background:#d4d0c8;border-top:1px solid #6c6c6c;box-sizing:border-box;"></div>
<div style="left:686px;top:335px;width:4px;height:18px;background:#ffffe1;"></div>
<div style="left:691px;top:335px;width:23px;height:18px;background:#d4d0c8;border-top:1px solid #6c6c6c;box-sizing:border-box;"></div>
<div style="left:697px;top:336px;width:2px;height:16px;background:#6c6c6c;"></div>
<div style="left:714px;top:335px;width:350px;height:17px;background:#ffffe1;border-top:2px solid #6c6c6c;box-sizing:border-box;"></div>
<div class="dop" style="left:718px;top:337px;">1. Given in ED</div>
<div class="dop" style="left:794px;top:337px;">2. Rx at discharge</div>
<div class="dop" style="left:884px;top:337px;">3. Both given in ED and Rx at discharge</div>
<div style="left:365px;top:353px;width:53px;height:18px;background:#d4d0c8;border-top:1px solid #6c6c6c;box-shadow:inset 0 1px #f8f8e8;box-sizing:border-box;"></div>
<div class="dt" style="left:366px;top:356px;font-size:11px;-webkit-text-stroke:0.2px #000;">Drugs 9</div>
<div style="left:418px;top:353px;width:1px;height:16px;background:#6c6c6c;"></div>
<div style="left:419px;top:353px;width:267px;height:18px;background:#d4d0c8;border-top:1px solid #6c6c6c;box-sizing:border-box;"></div>
<div style="left:686px;top:353px;width:4px;height:18px;background:#ffffe1;"></div>
<div style="left:691px;top:353px;width:23px;height:18px;background:#d4d0c8;border-top:1px solid #6c6c6c;box-sizing:border-box;"></div>
<div style="left:697px;top:354px;width:2px;height:16px;background:#6c6c6c;"></div>
<div style="left:714px;top:353px;width:350px;height:17px;background:#ffffe1;border-top:2px solid #6c6c6c;box-sizing:border-box;"></div>
<div class="dop" style="left:718px;top:355px;">1. Given in ED</div>
<div class="dop" style="left:794px;top:355px;">2. Rx at discharge</div>
<div class="dop" style="left:884px;top:355px;">3. Both given in ED and Rx at discharge</div>
<div style="left:365px;top:371px;width:53px;height:18px;background:#d4d0c8;border-top:1px solid #6c6c6c;box-shadow:inset 0 1px #f8f8e8;box-sizing:border-box;"></div>
<div class="dt" style="left:366px;top:374px;font-size:11px;-webkit-text-stroke:0.2px #000;">Drugs 10</div>
<div style="left:418px;top:371px;width:1px;height:16px;background:#6c6c6c;"></div>
<div style="left:419px;top:371px;width:267px;height:18px;background:#d4d0c8;border-top:1px solid #6c6c6c;box-sizing:border-box;"></div>
<div style="left:686px;top:371px;width:4px;height:18px;background:#d4d0c8;"></div>
<div style="left:691px;top:371px;width:23px;height:18px;background:#d4d0c8;border-top:1px solid #6c6c6c;box-sizing:border-box;"></div>
<div style="left:697px;top:372px;width:2px;height:16px;background:#6c6c6c;"></div>
<div style="left:714px;top:371px;width:350px;height:17px;background:#ffffe1;border-top:2px solid #6c6c6c;box-sizing:border-box;"></div>
<div class="dop" style="left:718px;top:373px;">1. Given in ED</div>
<div class="dop" style="left:794px;top:373px;">2. Rx at discharge</div>
<div class="dop" style="left:884px;top:373px;">3. Both given in ED and Rx at discharge</div>
<div style="left:365px;top:390px;width:53px;height:18px;background:#d4d0c8;border-top:1px solid #6c6c6c;box-shadow:inset 0 1px #f8f8e8;box-sizing:border-box;"></div>
<div class="dt" style="left:366px;top:393px;font-size:11px;-webkit-text-stroke:0.2px #000;">Drugs 11</div>
<div style="left:418px;top:390px;width:1px;height:16px;background:#6c6c6c;"></div>
<div style="left:419px;top:390px;width:267px;height:18px;background:#d4d0c8;border-top:1px solid #6c6c6c;box-sizing:border-box;"></div>
<div style="left:686px;top:390px;width:4px;height:18px;background:#d4d0c8;"></div>
<div style="left:691px;top:390px;width:23px;height:18px;background:#d4d0c8;border-top:1px solid #6c6c6c;box-sizing:border-box;"></div>
<div style="left:697px;top:391px;width:2px;height:16px;background:#6c6c6c;"></div>
<div style="left:714px;top:390px;width:350px;height:17px;background:#ffffe1;border-top:2px solid #6c6c6c;box-sizing:border-box;"></div>
<div class="dop" style="left:718px;top:392px;">1. Given in ED</div>
<div class="dop" style="left:794px;top:392px;">2. Rx at discharge</div>
<div class="dop" style="left:884px;top:392px;">3. Both given in ED and Rx at discharge</div>
<div style="left:365px;top:408px;width:53px;height:16px;background:#d4d0c8;border-top:1px solid #6c6c6c;box-shadow:inset 0 1px #f8f8e8;box-sizing:border-box;"></div>
<div class="dt" style="left:366px;top:411px;font-size:11px;-webkit-text-stroke:0.2px #000;">Drugs 12</div>
<div style="left:418px;top:408px;width:1px;height:14px;background:#6c6c6c;"></div>
<div style="left:419px;top:408px;width:267px;height:16px;background:#d4d0c8;border-top:1px solid #6c6c6c;box-sizing:border-box;"></div>
<div style="left:686px;top:408px;width:4px;height:16px;background:#d4d0c8;"></div>
<div style="left:691px;top:408px;width:23px;height:16px;background:#d4d0c8;border-top:1px solid #6c6c6c;box-sizing:border-box;"></div>
<div style="left:697px;top:409px;width:2px;height:14px;background:#6c6c6c;"></div>
<div style="left:714px;top:408px;width:350px;height:15px;background:#ffffe1;border-top:2px solid #6c6c6c;box-sizing:border-box;"></div>
<div class="dop" style="left:718px;top:410px;">1. Given in ED</div>
<div class="dop" style="left:794px;top:410px;">2. Rx at discharge</div>
<div class="dop" style="left:884px;top:410px;">3. Both given in ED and Rx at discharge</div>
<div style="left:365px;top:425px;width:699px;height:180px;background:#ffffe1;"></div>
<div style="left:365px;top:425px;width:234px;height:53px;background:#ffffe1;border-top:2px solid #6c6c6c;border-left:2px solid #6c6c6c;border-bottom:1px solid #eee;box-sizing:border-box;"></div>
<div style="left:368px;top:432px;width:4px;height:4px;background:#0000ff;transform:rotate(45deg) scaleY(1.3);"></div>
<div class="dl" style="left:377px;top:430px;">Enter all providers seen at this visit,</div>
<div class="dl" style="left:376px;top:444px;">separate with commas</div>
<div style="left:371px;top:462px;width:5px;height:14px;background:#d4d0c8;"></div>
<div style="left:377px;top:461px;width:103px;height:16px;background:#fff;border-top:2px solid #555;border-left:2px solid #555;box-sizing:border-box;"></div>
<div class="cb" style="left:599px;top:426px;width:9px;height:9px;"></div><div class="dop" style="left:610px;top:426px;">1.</div><div class="dop" style="left:621px;top:426px;">ED attending physician</div>
<div class="cb" style="left:599px;top:439px;width:9px;height:9px;"></div><div class="dop" style="left:610px;top:439px;">2.</div><div class="dop" style="left:621px;top:439px;">ED resident/Intern</div>
<div class="cb" style="left:599px;top:452px;width:9px;height:9px;"></div><div class="dop" style="left:610px;top:452px;">3.</div><div class="dop" style="left:621px;top:452px;">Consulting physician</div>
<div class="cb" style="left:599px;top:464px;width:9px;height:9px;"></div><div class="dop" style="left:610px;top:464px;">4.</div><div class="dop" style="left:621px;top:464px;">RN/LPN</div>
<div class="cb" style="left:754px;top:426px;width:9px;height:9px;"></div><div class="dop" style="left:765px;top:426px;">5.</div><div class="dop" style="left:776px;top:426px;">Nurse practitioner</div>
<div class="cb" style="left:754px;top:439px;width:9px;height:9px;"></div><div class="dop" style="left:765px;top:439px;">6.</div><div class="dop" style="left:776px;top:439px;">Physician assistant</div>
<div class="cb" style="left:754px;top:452px;width:9px;height:9px;"></div><div class="dop" style="left:765px;top:452px;">7.</div><div class="dop" style="left:776px;top:452px;">EMT</div>
<div class="cb" style="left:754px;top:464px;width:9px;height:9px;"></div><div class="dop" style="left:765px;top:464px;">8.</div><div class="dop" style="left:776px;top:464px;">Other mental health provider</div>
<div class="cb" style="left:909px;top:426px;width:9px;height:9px;"></div><div class="dop" style="left:920px;top:426px;">9.</div><div class="dop" style="left:931px;top:426px;">Other</div>
<div style="left:365px;top:479px;width:699px;height:1px;background:#eee;"></div>
<div style="left:365px;top:480px;width:146px;height:34px;background:#ffffe1;border-top:2px solid #6c6c6c;border-left:2px solid #6c6c6c;border-bottom:1px solid #eee;box-sizing:border-box;"></div>
<div style="left:368px;top:487px;width:4px;height:4px;background:#0000ff;transform:rotate(45deg) scaleY(1.3);"></div>
<div class="dl" style="left:377px;top:485px;">Service level (CPT code)</div>
<div style="left:371px;top:499px;width:5px;height:14px;background:#d4d0c8;"></div>
<div style="left:377px;top:498px;width:16px;height:16px;background:#fff;border-top:2px solid #555;border-left:2px solid #555;box-sizing:border-box;"></div>
<svg style="left:512px;top:482px" width="9" height="9"><circle cx="4.5" cy="4.5" r="3.8" fill="#fff" stroke="#666" stroke-width="1"/></svg><div class="dop" style="left:521px;top:482px;">1.</div><div class="dop" style="left:533px;top:482px;">1 (99281)</div>
<svg style="left:512px;top:495px" width="9" height="9"><circle cx="4.5" cy="4.5" r="3.8" fill="#fff" stroke="#666" stroke-width="1"/></svg><div class="dop" style="left:521px;top:495px;">2.</div><div class="dop" style="left:533px;top:495px;">2 (99282)</div>
<svg style="left:650px;top:482px" width="9" height="9"><circle cx="4.5" cy="4.5" r="3.8" fill="#fff" stroke="#666" stroke-width="1"/></svg><div class="dop" style="left:659px;top:482px;">3.</div><div class="dop" style="left:671px;top:482px;">3 (99283)</div>
<svg style="left:650px;top:495px" width="9" height="9"><circle cx="4.5" cy="4.5" r="3.8" fill="#fff" stroke="#666" stroke-width="1"/></svg><div class="dop" style="left:659px;top:495px;">4.</div><div class="dop" style="left:671px;top:495px;">4 (99284)</div>
<svg style="left:788px;top:482px" width="9" height="9"><circle cx="4.5" cy="4.5" r="3.8" fill="#fff" stroke="#666" stroke-width="1"/></svg><div class="dop" style="left:797px;top:482px;">5.</div><div class="dop" style="left:809px;top:482px;">5 (99285)</div>
<svg style="left:788px;top:495px" width="9" height="9"><circle cx="4.5" cy="4.5" r="3.8" fill="#fff" stroke="#666" stroke-width="1"/></svg><div class="dop" style="left:797px;top:495px;">6.</div><div class="dop" style="left:809px;top:495px;">Critical care (99291)</div>
<svg style="left:926px;top:482px" width="9" height="9"><circle cx="4.5" cy="4.5" r="3.8" fill="#fff" stroke="#666" stroke-width="1"/></svg><div class="dop" style="left:935px;top:482px;">7.</div><div class="dop" style="left:947px;top:482px;">Unknown</div>
<div style="left:365px;top:514px;width:699px;height:1px;background:#eee;"></div>
<div style="left:365px;top:515px;width:234px;height:90px;background:#ffffe1;border-top:2px solid #6c6c6c;border-left:2px solid #6c6c6c;border-bottom:1px solid #eee;box-sizing:border-box;"></div>
<div style="left:368px;top:522px;width:4px;height:4px;background:#0000ff;transform:rotate(45deg) scaleY(1.3);"></div>
<div class="dl" style="left:377px;top:520px;">Visit Disposition</div>
<div class="dl" style="left:377px;top:534px;">(Enter all that apply, separate with commas)</div>
<div style="left:371px;top:589px;width:5px;height:14px;background:#d4d0c8;"></div>
<div style="left:377px;top:588px;width:204px;height:16px;background:#fff;border-top:2px solid #555;border-left:2px solid #555;box-sizing:border-box;"></div>
<div class="cb" style="left:599px;top:517px;width:9px;height:9px;"></div><div class="dop" style="left:610px;top:517px;">1.</div><div class="dop" style="left:625px;top:517px;">No follow-up planned</div>
<div class="cb" style="left:599px;top:530px;width:9px;height:9px;"></div><div class="dop" style="left:610px;top:530px;">2.</div><div class="dop" style="left:625px;top:530px;">Return to ED</div>
<div class="cb" style="left:599px;top:542px;width:9px;height:9px;"></div><div class="dop" style="left:610px;top:542px;">3.</div><div class="dop" style="left:625px;top:542px;">Return/Refer to</div><div class="dop" style="left:625px;top:553px;">physician/clinic for FU</div>
<div class="cb" style="left:599px;top:567px;width:9px;height:9px;"></div><div class="dop" style="left:610px;top:567px;">4.</div><div class="dop" style="left:625px;top:567px;">Left before triage</div>
<div class="cb" style="left:599px;top:579px;width:9px;height:9px;"></div><div class="dop" style="left:610px;top:579px;">5.</div><div class="dop" style="left:625px;top:579px;">Left after triage</div>
<div class="cb" style="left:599px;top:592px;width:9px;height:9px;"></div><div class="dop" style="left:610px;top:592px;">6.</div><div class="dop" style="left:625px;top:592px;">Left AMA</div>
<div class="cb" style="left:754px;top:517px;width:9px;height:9px;"></div><div class="dop" style="left:765px;top:517px;">7.</div><div class="dop" style="left:779px;top:517px;">DOA</div>
<div class="cb" style="left:754px;top:530px;width:9px;height:9px;"></div><div class="dop" style="left:765px;top:530px;">8.</div><div class="dop" style="left:779px;top:530px;">Died in ED</div>
<div class="cb" style="left:754px;top:542px;width:9px;height:9px;"></div><div class="dop" style="left:765px;top:542px;">9.</div><div class="dop" style="left:779px;top:542px;">Return/Transfer to nursing</div><div class="dop" style="left:779px;top:553px;">home</div>
<div class="cb" style="left:754px;top:567px;width:9px;height:9px;"></div><div class="dop" style="left:765px;top:567px;">10.</div><div class="dop" style="left:779px;top:567px;">Transfer to psychiatric</div><div class="dop" style="left:779px;top:578px;">hospital</div>
<div class="cb" style="left:754px;top:590px;width:9px;height:9px;"></div><div class="dop" style="left:765px;top:590px;">11.</div><div class="dop" style="left:779px;top:590px;">Transfer to other hospital</div>
<div class="cb" style="left:909px;top:517px;width:9px;height:9px;"></div><div class="dop" style="left:920px;top:517px;">12.</div><div class="dop" style="left:935px;top:517px;">Admit to this hospital</div>
<div class="cb" style="left:909px;top:530px;width:9px;height:9px;"></div><div class="dop" style="left:920px;top:530px;">13.</div><div class="dop" style="left:935px;top:530px;">Admit to observation unit then</div><div class="dop" style="left:935px;top:541px;">hospitalized</div>
<div class="cb" style="left:909px;top:554px;width:9px;height:9px;"></div><div class="dop" style="left:920px;top:554px;">14.</div><div class="dop" style="left:935px;top:554px;">Admit to observation unit,</div><div class="dop" style="left:935px;top:565px;">then discharged</div>
<div class="cb" style="left:909px;top:578px;width:9px;height:9px;"></div><div class="dop" style="left:920px;top:578px;">15.</div><div class="dop" style="left:935px;top:578px;">Other</div>
<div style="left:364px;top:605px;width:711px;height:6px;background:#d4d0c8;"></div>
<div style="left:1440px;top:0px;width:1280px;height:995px;background:#d4d0c8;"></div>
<div style="left:1441px;top:1px;width:1px;height:994px;background:#fff;"></div>
<div style="left:1441px;top:1px;width:1279px;height:1px;background:#fff;"></div>
<div style="left:1443px;top:3px;width:1274px;height:18px;background:linear-gradient(to right,#0a246a,#a6caf0);"></div>
<div style="left:1445px;top:4px;width:16px;height:16px;background:#dffcfc;border-left:2px solid #1fb7b7;border-top:2px solid #1fb7b7;box-sizing:border-box;"><svg width="14" height="14" style="position:absolute;left:0;top:0" viewBox="0 0 14 14"><path d="M6 2 C9 0 13 2 12 5 C11 7 9 6 8 7 L6 13 C4 12 2 10 3 8 C4 7 5 7 6 6 Z" fill="#0d6060"/></svg></div>
<div class="tt" style="left:1462px;top:6px;">National Hospital Ambulatory Medical Care Survey (NHAMCS-201) - version 1.24</div>
<div style="left:2699px;top:5px;width:16px;height:14px;background:#d4d0c8;box-shadow:inset -1px -1px #404040, inset 1px 1px #fff, inset -2px -2px #808080;"><svg width="16" height="14" style="position:absolute;left:0;top:0"><path d="M4 3L11 10M11 3L4 10" stroke="#000" stroke-width="1.6"/></svg></div>
<div class="mn" style="left:1448px;top:26px;">Forms</div>
<div class="mn" style="left:1489px;top:26px;">Answer</div>
<div class="mn" style="left:1537px;top:26px;">Navigate</div>
<div class="mn" style="left:1592px;top:26px;">Options</div>
<div class="mn" style="left:1641px;top:26px;">Help</div>
<div class="mn" style="left:1674px;top:26px;">Hide Watch Window</div>
<div style="left:1443px;top:41px;width:540px;height:28px;border-top:1px solid #fff;border-left:1px solid #fff;border-bottom:1px solid #808080;box-sizing:border-box;"></div>
<div style="left:1448px;top:44px;width:1px;height:23px;background:#fff;"></div>
<div style="left:1449px;top:44px;width:1px;height:23px;background:#808080;"></div>
<div style="left:1451px;top:44px;width:1px;height:23px;background:#fff;"></div>
<div style="left:1452px;top:44px;width:1px;height:23px;background:#808080;"></div>
<div style="left:1454px;top:44px;width:75px;height:24px;background:#d4d0c8;box-shadow:inset -1px -1px #404040, inset 1px 1px #fff, inset -2px -2px #808080;"></div>
<div class="bt" style="left:1454px;top:48px;width:75px;color:#808080;text-shadow:1px 1px #fff;"><u>1</u> First</div>
<div style="left:1529px;top:44px;width:75px;height:24px;background:#d4d0c8;box-shadow:inset -1px -1px #404040, inset 1px 1px #fff, inset -2px -2px #808080;"></div>
<div class="bt" style="left:1529px;top:48px;width:75px;color:#808080;text-shadow:1px 1px #fff;"><u>2</u> Prev</div>
<div style="left:1604px;top:44px;width:75px;height:24px;background:#d4d0c8;box-shadow:inset -1px -1px #404040, inset 1px 1px #fff, inset -2px -2px #808080;"></div>
<div class="bt" style="left:1604px;top:48px;width:75px;color:#808080;text-shadow:1px 1px #fff;"><u>3</u> Next</div>
<div style="left:1679px;top:44px;width:75px;height:24px;background:#d4d0c8;box-shadow:inset -1px -1px #404040, inset 1px 1px #fff, inset -2px -2px #808080;"></div>
<div class="bt" style="left:1679px;top:48px;width:75px;color:#808080;text-shadow:1px 1px #fff;"><u>4</u> Last</div>
<div style="left:1754px;top:44px;width:75px;height:24px;background:#d4d0c8;box-shadow:inset -1px -1px #404040, inset 1px 1px #fff, inset -2px -2px #808080;"></div>
<div class="bt" style="left:1754px;top:48px;width:75px;color:#000;"><u>5</u> Add</div>
<div style="left:1829px;top:44px;width:75px;height:24px;background:#d4d0c8;box-shadow:inset -1px -1px #404040, inset 1px 1px #fff, inset -2px -2px #808080;"></div>
<div class="bt" style="left:1829px;top:48px;width:75px;color:#000;"><u>6</u> Delete</div>
<div style="left:1904px;top:44px;width:75px;height:24px;background:#d4d0c8;box-shadow:inset -1px -1px #404040, inset 1px 1px #fff, inset -2px -2px #808080;"></div>
<div class="bt" style="left:1904px;top:48px;width:75px;color:#000;"><u>7</u> Exit</div>
<div style="left:1446px;top:73px;width:69px;height:23px;background:#d4d0c8;border-top:1px solid #fff;border-left:1px solid #fff;border-right:1px solid #404040;box-shadow:inset -1px 0 #808080;box-sizing:border-box;border-radius:2px 2px 0 0;"></div>
<div class="tb" style="left:1446px;top:77px;width:69px;">NHAMCS</div>
<div style="left:1515px;top:73px;width:189px;height:23px;background:#d4d0c8;border-top:1px solid #fff;border-left:1px solid #fff;border-right:1px solid #404040;box-shadow:inset -1px 0 #808080;box-sizing:border-box;border-radius:2px 2px 0 0;"></div>
<div class="tb" style="left:1515px;top:77px;width:189px;">Frequently asked questions</div>
<div style="left:1704px;top:73px;width:94px;height:23px;background:#d4d0c8;border-top:1px solid #fff;border-left:1px solid #fff;border-right:1px solid #404040;box-shadow:inset -1px 0 #808080;box-sizing:border-box;border-radius:2px 2px 0 0;"></div>
<div class="tb" style="left:1704px;top:77px;width:94px;">Appointment</div>
<div style="left:1798px;top:73px;width:137px;height:23px;background:#d4d0c8;border-top:1px solid #fff;border-left:1px solid #fff;border-right:1px solid #404040;box-shadow:inset -1px 0 #808080;box-sizing:border-box;border-radius:2px 2px 0 0;"></div>
<div class="tb" style="left:1798px;top:77px;width:137px;">Patient Information</div>
<div style="left:1935px;top:73px;width:88px;height:23px;background:#d4d0c8;border-top:1px solid #fff;border-left:1px solid #fff;border-right:1px solid #404040;box-shadow:inset -1px 0 #808080;box-sizing:border-box;border-radius:2px 2px 0 0;"></div>
<div class="tb" style="left:1935px;top:77px;width:88px;">Triage Care</div>
<div style="left:2023px;top:73px;width:116px;height:23px;background:#d4d0c8;border-top:1px solid #fff;border-left:1px solid #fff;border-right:1px solid #404040;box-shadow:inset -1px 0 #808080;box-sizing:border-box;border-radius:2px 2px 0 0;"></div>
<div class="tb" style="left:2023px;top:77px;width:116px;">Injury Diagnosis</div>
<div style="left:2139px;top:73px;width:84px;height:23px;background:#d4d0c8;border-top:1px solid #fff;border-left:1px solid #fff;border-right:1px solid #404040;box-shadow:inset -1px 0 #808080;box-sizing:border-box;border-radius:2px 2px 0 0;"></div>
<div class="tb" style="left:2139px;top:77px;width:84px;">Diagnostics</div>
<div style="left:2223px;top:73px;width:78px;height:23px;background:#d4d0c8;border-top:1px solid #fff;border-left:1px solid #fff;border-right:1px solid #404040;box-shadow:inset -1px 0 #808080;box-sizing:border-box;border-radius:2px 2px 0 0;"></div>
<div class="tb" style="left:2223px;top:77px;width:78px;">Disposition</div>
<div style="left:2301px;top:71px;width:65px;height:25px;background:#d4d0c8;border-top:1px solid #fff;border-left:1px solid #fff;border-right:1px solid #404040;box-shadow:inset -1px 0 #808080;box-sizing:border-box;border-radius:2px 2px 0 0;"></div>
<div class="tb" style="left:2301px;top:75px;width:65px;">Hospital</div>
<div style="left:1443px;top:95px;width:1275px;height:1px;background:#fff;"></div>
<div style="left:2302px;top:95px;width:63px;height:2px;background:#d4d0c8;"></div>
<div style="left:1443px;top:95px;width:1px;height:900px;background:#fff;"></div>
<div style="left:2715px;top:95px;width:1px;height:900px;background:#808080;"></div>
<div style="left:2716px;top:95px;width:2px;height:900px;background:#404040;"></div>
<div style="left:1447px;top:99px;width:1204px;height:29px;background:#ffff80;"></div>
<div class="hd" style="left:1494px;top:104px;">1 of 1</div>
<div class="hd" style="left:1559px;top:104px;">PRF's</div>
<div class="hd" style="left:1678px;top:104px;">MRN:</div>
<div class="hd" style="left:1784px;top:104px;">NHAMCS-100(ED) HOSPITAL</div>
<div style="left:1449px;top:132px;width:252px;height:59px;background:#808080;"></div><div style="left:1450px;top:133px;width:251px;height:58px;background:#fff;"></div><div style="left:1450px;top:133px;width:250px;height:57px;background:#404040;"></div><div style="left:1451px;top:134px;width:249px;height:56px;background:#d4d0c8;"></div><div style="left:1451px;top:134px;width:248px;height:55px;background:#ffffe1;"></div>
<div style="left:1699px;top:132px;width:949px;height:59px;background:#ffffe1;"></div>
<div class="dia" style="left:1456px;top:143px"></div><div class="lb" style="left:1469px;top:138px;">Admitted to</div>
<div style="left:1459px;top:165px;width:9px;height:23px;background:#d4d0c8;"></div><div style="left:1469px;top:162px;width:30px;height:28px;background:#808080;"></div><div style="left:1470px;top:163px;width:29px;height:27px;background:#fff;"></div><div style="left:1470px;top:163px;width:28px;height:26px;background:#404040;"></div><div style="left:1471px;top:164px;width:27px;height:25px;background:#d4d0c8;"></div><div style="left:1471px;top:164px;width:26px;height:24px;background:#fff;"></div>
<div style="left:1496px;top:165px;width:1px;height:22px;background:#000;"></div>
<svg style="position:absolute;left:1701px;top:135px" width="13" height="13" viewBox="0 0 13 13"><circle cx="6.5" cy="6.5" r="5.8" fill="#fff"/><path d="M2.1 10.9 A6 6 0 0 1 10.9 2.1" fill="none" stroke="#808080" stroke-width="1.1"/><path d="M2.9 10.1 A4.9 4.9 0 0 1 10.1 2.9" fill="none" stroke="#404040" stroke-width="1.1"/><path d="M10.9 2.1 A6 6 0 0 1 2.1 10.9" fill="none" stroke="#fff" stroke-width="1.1"/><path d="M10.1 2.9 A4.9 4.9 0 0 1 2.9 10.1" fill="none" stroke="#d4d0c8" stroke-width="1.1"/></svg><div class="o" style="left:1719px;top:133px;">1.</div><div class="o" style="left:1738px;top:133px;">Critical care unit</div>
<svg style="position:absolute;left:1701px;top:157px" width="13" height="13" viewBox="0 0 13 13"><circle cx="6.5" cy="6.5" r="5.8" fill="#fff"/><path d="M2.1 10.9 A6 6 0 0 1 10.9 2.1" fill="none" stroke="#808080" stroke-width="1.1"/><path d="M2.9 10.1 A4.9 4.9 0 0 1 10.1 2.9" fill="none" stroke="#404040" stroke-width="1.1"/><path d="M10.9 2.1 A6 6 0 0 1 2.1 10.9" fill="none" stroke="#fff" stroke-width="1.1"/><path d="M10.1 2.9 A4.9 4.9 0 0 1 2.9 10.1" fill="none" stroke="#d4d0c8" stroke-width="1.1"/></svg><div class="o" style="left:1719px;top:155px;">2.</div><div class="o" style="left:1738px;top:155px;">Stepdown unit</div>
<svg style="position:absolute;left:1938px;top:135px" width="13" height="13" viewBox="0 0 13 13"><circle cx="6.5" cy="6.5" r="5.8" fill="#fff"/><path d="M2.1 10.9 A6 6 0 0 1 10.9 2.1" fill="none" stroke="#808080" stroke-width="1.1"/><path d="M2.9 10.1 A4.9 4.9 0 0 1 10.1 2.9" fill="none" stroke="#404040" stroke-width="1.1"/><path d="M10.9 2.1 A6 6 0 0 1 2.1 10.9" fill="none" stroke="#fff" stroke-width="1.1"/><path d="M10.1 2.9 A4.9 4.9 0 0 1 2.9 10.1" fill="none" stroke="#d4d0c8" stroke-width="1.1"/></svg><div class="o" style="left:1956px;top:133px;">3.</div><div class="o" style="left:1975px;top:133px;">Operating room</div>
<svg style="position:absolute;left:1938px;top:157px" width="13" height="13" viewBox="0 0 13 13"><circle cx="6.5" cy="6.5" r="5.8" fill="#fff"/><path d="M2.1 10.9 A6 6 0 0 1 10.9 2.1" fill="none" stroke="#808080" stroke-width="1.1"/><path d="M2.9 10.1 A4.9 4.9 0 0 1 10.1 2.9" fill="none" stroke="#404040" stroke-width="1.1"/><path d="M10.9 2.1 A6 6 0 0 1 2.1 10.9" fill="none" stroke="#fff" stroke-width="1.1"/><path d="M10.1 2.9 A4.9 4.9 0 0 1 2.9 10.1" fill="none" stroke="#d4d0c8" stroke-width="1.1"/></svg><div class="o" style="left:1956px;top:155px;">4.</div><div class="o" style="left:1975px;top:155px;">Mental health or detox unit</div>
<svg style="position:absolute;left:2175px;top:135px" width="13" height="13" viewBox="0 0 13 13"><circle cx="6.5" cy="6.5" r="5.8" fill="#fff"/><path d="M2.1 10.9 A6 6 0 0 1 10.9 2.1" fill="none" stroke="#808080" stroke-width="1.1"/><path d="M2.9 10.1 A4.9 4.9 0 0 1 10.1 2.9" fill="none" stroke="#404040" stroke-width="1.1"/><path d="M10.9 2.1 A6 6 0 0 1 2.1 10.9" fill="none" stroke="#fff" stroke-width="1.1"/><path d="M10.1 2.9 A4.9 4.9 0 0 1 2.9 10.1" fill="none" stroke="#d4d0c8" stroke-width="1.1"/></svg><div class="o" style="left:2193px;top:133px;">5.</div><div class="o" style="left:2212px;top:133px;">Cardiac catheterization lab</div>
<svg style="position:absolute;left:2175px;top:157px" width="13" height="13" viewBox="0 0 13 13"><circle cx="6.5" cy="6.5" r="5.8" fill="#fff"/><path d="M2.1 10.9 A6 6 0 0 1 10.9 2.1" fill="none" stroke="#808080" stroke-width="1.1"/><path d="M2.9 10.1 A4.9 4.9 0 0 1 10.1 2.9" fill="none" stroke="#404040" stroke-width="1.1"/><path d="M10.9 2.1 A6 6 0 0 1 2.1 10.9" fill="none" stroke="#fff" stroke-width="1.1"/><path d="M10.1 2.9 A4.9 4.9 0 0 1 2.9 10.1" fill="none" stroke="#d4d0c8" stroke-width="1.1"/></svg><div class="o" style="left:2193px;top:155px;">6.</div><div class="o" style="left:2212px;top:155px;">Other bed/unit</div>
<svg style="position:absolute;left:2412px;top:135px" width="13" height="13" viewBox="0 0 13 13"><circle cx="6.5" cy="6.5" r="5.8" fill="#fff"/><path d="M2.1 10.9 A6 6 0 0 1 10.9 2.1" fill="none" stroke="#808080" stroke-width="1.1"/><path d="M2.9 10.1 A4.9 4.9 0 0 1 10.1 2.9" fill="none" stroke="#404040" stroke-width="1.1"/><path d="M10.9 2.1 A6 6 0 0 1 2.1 10.9" fill="none" stroke="#fff" stroke-width="1.1"/><path d="M10.1 2.9 A4.9 4.9 0 0 1 2.9 10.1" fill="none" stroke="#d4d0c8" stroke-width="1.1"/></svg><div class="o" style="left:2430px;top:133px;">7.</div><div class="o" style="left:2449px;top:133px;">Unknown</div>
<div style="left:1447px;top:130px;width:1204px;height:62px;border:1px dotted #000;box-sizing:border-box;"></div>
<div style="left:1449px;top:194px;width:252px;height:59px;background:#808080;"></div><div style="left:1450px;top:195px;width:251px;height:58px;background:#fff;"></div><div style="left:1450px;top:195px;width:250px;height:57px;background:#404040;"></div><div style="left:1451px;top:196px;width:249px;height:56px;background:#d4d0c8;"></div><div style="left:1451px;top:196px;width:248px;height:55px;background:#ffffe1;"></div>
<div style="left:1699px;top:194px;width:949px;height:59px;background:#ffffe1;"></div>
<div class="dia" style="left:1456px;top:205px"></div><div class="lb" style="left:1469px;top:200px;">Admitting physician</div>
<div style="left:1459px;top:227px;width:9px;height:23px;background:#d4d0c8;"></div><div style="left:1469px;top:224px;width:30px;height:28px;background:#808080;"></div><div style="left:1470px;top:225px;width:29px;height:27px;background:#fff;"></div><div style="left:1470px;top:225px;width:28px;height:26px;background:#404040;"></div><div style="left:1471px;top:226px;width:27px;height:25px;background:#d4d0c8;"></div><div style="left:1471px;top:226px;width:26px;height:24px;background:#fff;"></div>
<svg style="position:absolute;left:1701px;top:197px" width="13" height="13" viewBox="0 0 13 13"><circle cx="6.5" cy="6.5" r="5.8" fill="#fff"/><path d="M2.1 10.9 A6 6 0 0 1 10.9 2.1" fill="none" stroke="#808080" stroke-width="1.1"/><path d="M2.9 10.1 A4.9 4.9 0 0 1 10.1 2.9" fill="none" stroke="#404040" stroke-width="1.1"/><path d="M10.9 2.1 A6 6 0 0 1 2.1 10.9" fill="none" stroke="#fff" stroke-width="1.1"/><path d="M10.1 2.9 A4.9 4.9 0 0 1 2.9 10.1" fill="none" stroke="#d4d0c8" stroke-width="1.1"/></svg><div class="o" style="left:1719px;top:195px;">1.</div><div class="o" style="left:1738px;top:195px;">Hospitalist</div>
<svg style="position:absolute;left:1701px;top:219px" width="13" height="13" viewBox="0 0 13 13"><circle cx="6.5" cy="6.5" r="5.8" fill="#fff"/><path d="M2.1 10.9 A6 6 0 0 1 10.9 2.1" fill="none" stroke="#808080" stroke-width="1.1"/><path d="M2.9 10.1 A4.9 4.9 0 0 1 10.1 2.9" fill="none" stroke="#404040" stroke-width="1.1"/><path d="M10.9 2.1 A6 6 0 0 1 2.1 10.9" fill="none" stroke="#fff" stroke-width="1.1"/><path d="M10.1 2.9 A4.9 4.9 0 0 1 2.9 10.1" fill="none" stroke="#d4d0c8" stroke-width="1.1"/></svg><div class="o" style="left:1719px;top:217px;">2.</div><div class="o" style="left:1738px;top:217px;">Not hospitalist</div>
<svg style="position:absolute;left:1938px;top:197px" width="13" height="13" viewBox="0 0 13 13"><circle cx="6.5" cy="6.5" r="5.8" fill="#fff"/><path d="M2.1 10.9 A6 6 0 0 1 10.9 2.1" fill="none" stroke="#808080" stroke-width="1.1"/><path d="M2.9 10.1 A4.9 4.9 0 0 1 10.1 2.9" fill="none" stroke="#404040" stroke-width="1.1"/><path d="M10.9 2.1 A6 6 0 0 1 2.1 10.9" fill="none" stroke="#fff" stroke-width="1.1"/><path d="M10.1 2.9 A4.9 4.9 0 0 1 2.9 10.1" fill="none" stroke="#d4d0c8" stroke-width="1.1"/></svg><div class="o" style="left:1956px;top:195px;">3.</div><div class="o" style="left:1975px;top:195px;">Unknown</div>
<div style="left:1449px;top:255px;width:599px;height:59px;background:#808080;"></div><div style="left:1450px;top:256px;width:598px;height:58px;background:#fff;"></div><div style="left:1450px;top:256px;width:597px;height:57px;background:#404040;"></div><div style="left:1451px;top:257px;width:596px;height:56px;background:#d4d0c8;"></div><div style="left:1451px;top:257px;width:595px;height:55px;background:#ffffe1;"></div><div style="left:2049px;top:255px;width:600px;height:59px;background:#808080;"></div><div style="left:2050px;top:256px;width:599px;height:58px;background:#fff;"></div><div style="left:2050px;top:256px;width:598px;height:57px;background:#404040;"></div><div style="left:2051px;top:257px;width:597px;height:56px;background:#d4d0c8;"></div><div style="left:2051px;top:257px;width:596px;height:55px;background:#ffffe1;"></div><div class="dia" style="left:1456px;top:266px"></div><div class="lb" style="left:1469px;top:261px;">Date bed was requested for hospital admission</div><div style="left:1459px;top:289px;width:9px;height:23px;background:#d4d0c8;"></div><div style="left:1469px;top:286px;width:125px;height:28px;background:#808080;"></div><div style="left:1470px;top:287px;width:124px;height:27px;background:#fff;"></div><div style="left:1470px;top:287px;width:123px;height:26px;background:#404040;"></div><div style="left:1471px;top:288px;width:122px;height:25px;background:#d4d0c8;"></div><div style="left:1471px;top:288px;width:121px;height:24px;background:#fff;"></div><div style="left:1568px;top:288px;width:24px;height:24px;background:#d4d0c8;border-top:1px solid #fff;border-left:1px solid #fff;box-shadow:inset -1px -1px #404040, inset -2px -2px #808080;box-sizing:border-box;"></div><svg style="position:absolute;left:1576px;top:298px" width="8" height="5"><path d="M0 0H7L3.5 4Z" fill="#000"/></svg><div class="dia" style="left:2056px;top:266px"></div><div class="lb" style="left:2069px;top:261px;">Time bed was requested for hospital admission</div><div style="left:2059px;top:289px;width:9px;height:23px;background:#d4d0c8;"></div><div style="left:2069px;top:286px;width:105px;height:28px;background:#808080;"></div><div style="left:2070px;top:287px;width:104px;height:27px;background:#fff;"></div><div style="left:2070px;top:287px;width:103px;height:26px;background:#404040;"></div><div style="left:2071px;top:288px;width:102px;height:25px;background:#d4d0c8;"></div><div style="left:2071px;top:288px;width:101px;height:24px;background:#fff;"></div><div class="lb" style="left:2212px;top:285px;font-size:18.4px;">Enter HH:MM AM/PM/ML</div>
<div style="left:1449px;top:317px;width:599px;height:59px;background:#808080;"></div><div style="left:1450px;top:318px;width:598px;height:58px;background:#fff;"></div><div style="left:1450px;top:318px;width:597px;height:57px;background:#404040;"></div><div style="left:1451px;top:319px;width:596px;height:56px;background:#d4d0c8;"></div><div style="left:1451px;top:319px;width:595px;height:55px;background:#ffffe1;"></div><div style="left:2049px;top:317px;width:600px;height:59px;background:#808080;"></div><div style="left:2050px;top:318px;width:599px;height:58px;background:#fff;"></div><div style="left:2050px;top:318px;width:598px;height:57px;background:#404040;"></div><div style="left:2051px;top:319px;width:597px;height:56px;background:#d4d0c8;"></div><div style="left:2051px;top:319px;width:596px;height:55px;background:#ffffe1;"></div><div class="dia" style="left:1456px;top:328px"></div><div class="lb" style="left:1469px;top:323px;">Date patient actually left the ED or observation unit</div><div style="left:1459px;top:351px;width:9px;height:23px;background:#d4d0c8;"></div><div style="left:1469px;top:348px;width:125px;height:28px;background:#808080;"></div><div style="left:1470px;top:349px;width:124px;height:27px;background:#fff;"></div><div style="left:1470px;top:349px;width:123px;height:26px;background:#404040;"></div><div style="left:1471px;top:350px;width:122px;height:25px;background:#d4d0c8;"></div><div style="left:1471px;top:350px;width:121px;height:24px;background:#fff;"></div><div style="left:1568px;top:350px;width:24px;height:24px;background:#d4d0c8;border-top:1px solid #fff;border-left:1px solid #fff;box-shadow:inset -1px -1px #404040, inset -2px -2px #808080;box-sizing:border-box;"></div><svg style="position:absolute;left:1576px;top:360px" width="8" height="5"><path d="M0 0H7L3.5 4Z" fill="#000"/></svg><div class="dia" style="left:2056px;top:328px"></div><div class="lb" style="left:2069px;top:323px;">Time patient actually left the ED or observation unit</div><div style="left:2059px;top:351px;width:9px;height:23px;background:#d4d0c8;"></div><div style="left:2069px;top:348px;width:105px;height:28px;background:#808080;"></div><div style="left:2070px;top:349px;width:104px;height:27px;background:#fff;"></div><div style="left:2070px;top:349px;width:103px;height:26px;background:#404040;"></div><div style="left:2071px;top:350px;width:102px;height:25px;background:#d4d0c8;"></div><div style="left:2071px;top:350px;width:101px;height:24px;background:#fff;"></div><div class="lb" style="left:2212px;top:347px;font-size:18.4px;">Enter HH:MM AM/PM/ML</div>
<div style="left:1449px;top:379px;width:1200px;height:59px;background:#808080;"></div><div style="left:1450px;top:380px;width:1199px;height:58px;background:#fff;"></div><div style="left:1450px;top:380px;width:1198px;height:57px;background:#404040;"></div><div style="left:1451px;top:381px;width:1197px;height:56px;background:#d4d0c8;"></div><div style="left:1451px;top:381px;width:1196px;height:55px;background:#ffffe1;"></div><div class="dia" style="left:1456px;top:390px"></div><div class="lb" style="left:1469px;top:385px;">Hospital discharge date</div><div style="left:1459px;top:413px;width:9px;height:23px;background:#d4d0c8;"></div><div style="left:1469px;top:410px;width:125px;height:28px;background:#808080;"></div><div style="left:1470px;top:411px;width:124px;height:27px;background:#fff;"></div><div style="left:1470px;top:411px;width:123px;height:26px;background:#404040;"></div><div style="left:1471px;top:412px;width:122px;height:25px;background:#d4d0c8;"></div><div style="left:1471px;top:412px;width:121px;height:24px;background:#fff;"></div><div style="left:1568px;top:412px;width:24px;height:24px;background:#d4d0c8;border-top:1px solid #fff;border-left:1px solid #fff;box-shadow:inset -1px -1px #404040, inset -2px -2px #808080;box-sizing:border-box;"></div><svg style="position:absolute;left:1576px;top:422px" width="8" height="5"><path d="M0 0H7L3.5 4Z" fill="#000"/></svg>
<div style="left:1449px;top:441px;width:1200px;height:60px;background:#808080;"></div><div style="left:1450px;top:442px;width:1199px;height:59px;background:#fff;"></div><div style="left:1450px;top:442px;width:1198px;height:58px;background:#404040;"></div><div style="left:1451px;top:443px;width:1197px;height:57px;background:#d4d0c8;"></div><div style="left:1451px;top:443px;width:1196px;height:56px;background:#ffffe1;"></div>
<div class="dia" style="left:1456px;top:452px"></div><div class="lb" style="left:1469px;top:447px;">Principle hospital discharge diagnosis</div>
<div style="left:1459px;top:476px;width:9px;height:23px;background:#d4d0c8;"></div><div style="left:1469px;top:473px;width:998px;height:28px;background:#808080;"></div><div style="left:1470px;top:474px;width:997px;height:27px;background:#fff;"></div><div style="left:1470px;top:474px;width:996px;height:26px;background:#404040;"></div><div style="left:1471px;top:475px;width:995px;height:25px;background:#d4d0c8;"></div><div style="left:1471px;top:475px;width:994px;height:24px;background:#fff;"></div>
<div style="left:1449px;top:503px;width:402px;height:91px;background:#808080;"></div><div style="left:1450px;top:504px;width:401px;height:90px;background:#fff;"></div><div style="left:1450px;top:504px;width:400px;height:89px;background:#404040;"></div><div style="left:1451px;top:505px;width:399px;height:88px;background:#d4d0c8;"></div><div style="left:1451px;top:505px;width:398px;height:87px;background:#ffffe1;"></div>
<div style="left:1849px;top:503px;width:799px;height:91px;background:#ffffe1;"></div>
<div class="dia" style="left:1456px;top:514px"></div><div class="lb" style="left:1469px;top:509px;">Hospital discharge status/disposition</div>
<div style="left:1459px;top:568px;width:9px;height:23px;background:#d4d0c8;"></div><div style="left:1469px;top:565px;width:30px;height:28px;background:#808080;"></div><div style="left:1470px;top:566px;width:29px;height:27px;background:#fff;"></div><div style="left:1470px;top:566px;width:28px;height:26px;background:#404040;"></div><div style="left:1471px;top:567px;width:27px;height:25px;background:#d4d0c8;"></div><div style="left:1471px;top:567px;width:26px;height:24px;background:#fff;"></div>
<svg style="position:absolute;left:1851px;top:507px" width="13" height="13" viewBox="0 0 13 13"><circle cx="6.5" cy="6.5" r="5.8" fill="#fff"/><path d="M2.1 10.9 A6 6 0 0 1 10.9 2.1" fill="none" stroke="#808080" stroke-width="1.1"/><path d="M2.9 10.1 A4.9 4.9 0 0 1 10.1 2.9" fill="none" stroke="#404040" stroke-width="1.1"/><path d="M10.9 2.1 A6 6 0 0 1 2.1 10.9" fill="none" stroke="#fff" stroke-width="1.1"/><path d="M10.1 2.9 A4.9 4.9 0 0 1 2.9 10.1" fill="none" stroke="#d4d0c8" stroke-width="1.1"/></svg><div class="o" style="left:1869px;top:505px;">1.</div><div class="o" style="left:1888px;top:505px;">Alive</div>
<svg style="position:absolute;left:1851px;top:529px" width="13" height="13" viewBox="0 0 13 13"><circle cx="6.5" cy="6.5" r="5.8" fill="#fff"/><path d="M2.1 10.9 A6 6 0 0 1 10.9 2.1" fill="none" stroke="#808080" stroke-width="1.1"/><path d="M2.9 10.1 A4.9 4.9 0 0 1 10.1 2.9" fill="none" stroke="#404040" stroke-width="1.1"/><path d="M10.9 2.1 A6 6 0 0 1 2.1 10.9" fill="none" stroke="#fff" stroke-width="1.1"/><path d="M10.1 2.9 A4.9 4.9 0 0 1 2.9 10.1" fill="none" stroke="#d4d0c8" stroke-width="1.1"/></svg><div class="o" style="left:1869px;top:527px;">2.</div><div class="o" style="left:1888px;top:527px;">Dead</div>
<svg style="position:absolute;left:1851px;top:551px" width="13" height="13" viewBox="0 0 13 13"><circle cx="6.5" cy="6.5" r="5.8" fill="#fff"/><path d="M2.1 10.9 A6 6 0 0 1 10.9 2.1" fill="none" stroke="#808080" stroke-width="1.1"/><path d="M2.9 10.1 A4.9 4.9 0 0 1 10.1 2.9" fill="none" stroke="#404040" stroke-width="1.1"/><path d="M10.9 2.1 A6 6 0 0 1 2.1 10.9" fill="none" stroke="#fff" stroke-width="1.1"/><path d="M10.1 2.9 A4.9 4.9 0 0 1 2.9 10.1" fill="none" stroke="#d4d0c8" stroke-width="1.1"/></svg><div class="o" style="left:1869px;top:549px;">3.</div><div class="o" style="left:1888px;top:549px;">Unknown</div>
<div style="left:1449px;top:596px;width:402px;height:91px;background:#808080;"></div><div style="left:1450px;top:597px;width:401px;height:90px;background:#fff;"></div><div style="left:1450px;top:597px;width:400px;height:89px;background:#404040;"></div><div style="left:1451px;top:598px;width:399px;height:88px;background:#d4d0c8;"></div><div style="left:1451px;top:598px;width:398px;height:87px;background:#ffffe1;"></div>
<div style="left:1849px;top:596px;width:799px;height:91px;background:#ffffe1;"></div>
<div class="dia" style="left:1456px;top:607px"></div><div class="lb" style="left:1469px;top:602px;">Hospital discharge disposition</div>
<div style="left:1459px;top:661px;width:9px;height:23px;background:#d4d0c8;"></div><div style="left:1469px;top:658px;width:30px;height:28px;background:#808080;"></div><div style="left:1470px;top:659px;width:29px;height:27px;background:#fff;"></div><div style="left:1470px;top:659px;width:28px;height:26px;background:#404040;"></div><div style="left:1471px;top:660px;width:27px;height:25px;background:#d4d0c8;"></div><div style="left:1471px;top:660px;width:26px;height:24px;background:#d4d0c8;"></div>
<svg style="position:absolute;left:1851px;top:600px" width="13" height="13" viewBox="0 0 13 13"><circle cx="6.5" cy="6.5" r="5.8" fill="#d4d0c8"/><path d="M2.1 10.9 A6 6 0 0 1 10.9 2.1" fill="none" stroke="#808080" stroke-width="1.1"/><path d="M2.9 10.1 A4.9 4.9 0 0 1 10.1 2.9" fill="none" stroke="#404040" stroke-width="1.1"/><path d="M10.9 2.1 A6 6 0 0 1 2.1 10.9" fill="none" stroke="#fff" stroke-width="1.1"/><path d="M10.1 2.9 A4.9 4.9 0 0 1 2.9 10.1" fill="none" stroke="#d4d0c8" stroke-width="1.1"/></svg><div class="o" style="left:1869px;top:598px;">1.</div><div class="o" style="left:1888px;top:598px;">Home/Residence</div>
<svg style="position:absolute;left:1851px;top:622px" width="13" height="13" viewBox="0 0 13 13"><circle cx="6.5" cy="6.5" r="5.8" fill="#d4d0c8"/><path d="M2.1 10.9 A6 6 0 0 1 10.9 2.1" fill="none" stroke="#808080" stroke-width="1.1"/><path d="M2.9 10.1 A4.9 4.9 0 0 1 10.1 2.9" fill="none" stroke="#404040" stroke-width="1.1"/><path d="M10.9 2.1 A6 6 0 0 1 2.1 10.9" fill="none" stroke="#fff" stroke-width="1.1"/><path d="M10.1 2.9 A4.9 4.9 0 0 1 2.9 10.1" fill="none" stroke="#d4d0c8" stroke-width="1.1"/></svg><div class="o" style="left:1869px;top:620px;">2.</div><div class="o" style="left:1888px;top:620px;">Return/Transfer to nursing</div><div class="o" style="left:1888px;top:638px;">home</div>
<svg style="position:absolute;left:2117px;top:600px" width="13" height="13" viewBox="0 0 13 13"><circle cx="6.5" cy="6.5" r="5.8" fill="#d4d0c8"/><path d="M2.1 10.9 A6 6 0 0 1 10.9 2.1" fill="none" stroke="#808080" stroke-width="1.1"/><path d="M2.9 10.1 A4.9 4.9 0 0 1 10.1 2.9" fill="none" stroke="#404040" stroke-width="1.1"/><path d="M10.9 2.1 A6 6 0 0 1 2.1 10.9" fill="none" stroke="#fff" stroke-width="1.1"/><path d="M10.1 2.9 A4.9 4.9 0 0 1 2.9 10.1" fill="none" stroke="#d4d0c8" stroke-width="1.1"/></svg><div class="o" style="left:2135px;top:598px;">3.</div><div class="o" style="left:2154px;top:598px;">Transfer to another facility (not</div><div class="o" style="left:2154px;top:616px;">usual place of residence)</div>
<svg style="position:absolute;left:2117px;top:640px" width="13" height="13" viewBox="0 0 13 13"><circle cx="6.5" cy="6.5" r="5.8" fill="#d4d0c8"/><path d="M2.1 10.9 A6 6 0 0 1 10.9 2.1" fill="none" stroke="#808080" stroke-width="1.1"/><path d="M2.9 10.1 A4.9 4.9 0 0 1 10.1 2.9" fill="none" stroke="#404040" stroke-width="1.1"/><path d="M10.9 2.1 A6 6 0 0 1 2.1 10.9" fill="none" stroke="#fff" stroke-width="1.1"/><path d="M10.1 2.9 A4.9 4.9 0 0 1 2.9 10.1" fill="none" stroke="#d4d0c8" stroke-width="1.1"/></svg><div class="o" style="left:2135px;top:638px;">4.</div><div class="o" style="left:2154px;top:638px;">Other</div>
<svg style="position:absolute;left:2117px;top:662px" width="13" height="13" viewBox="0 0 13 13"><circle cx="6.5" cy="6.5" r="5.8" fill="#d4d0c8"/><path d="M2.1 10.9 A6 6 0 0 1 10.9 2.1" fill="none" stroke="#808080" stroke-width="1.1"/><path d="M2.9 10.1 A4.9 4.9 0 0 1 10.1 2.9" fill="none" stroke="#404040" stroke-width="1.1"/><path d="M10.9 2.1 A6 6 0 0 1 2.1 10.9" fill="none" stroke="#fff" stroke-width="1.1"/><path d="M10.1 2.9 A4.9 4.9 0 0 1 2.9 10.1" fill="none" stroke="#d4d0c8" stroke-width="1.1"/></svg><div class="o" style="left:2135px;top:660px;">5.</div><div class="o" style="left:2154px;top:660px;">Unknown</div>
<div style="left:1449px;top:690px;width:599px;height:59px;background:#808080;"></div><div style="left:1450px;top:691px;width:598px;height:58px;background:#fff;"></div><div style="left:1450px;top:691px;width:597px;height:57px;background:#404040;"></div><div style="left:1451px;top:692px;width:596px;height:56px;background:#d4d0c8;"></div><div style="left:1451px;top:692px;width:595px;height:55px;background:#ffffe1;"></div><div style="left:2049px;top:690px;width:600px;height:59px;background:#808080;"></div><div style="left:2050px;top:691px;width:599px;height:58px;background:#fff;"></div><div style="left:2050px;top:691px;width:598px;height:57px;background:#404040;"></div><div style="left:2051px;top:692px;width:597px;height:56px;background:#d4d0c8;"></div><div style="left:2051px;top:692px;width:596px;height:55px;background:#ffffe1;"></div><div class="dia" style="left:1456px;top:701px"></div><div class="lb" style="left:1469px;top:696px;">Date of observation unit discharge</div><div style="left:1459px;top:724px;width:9px;height:23px;background:#d4d0c8;"></div><div style="left:1469px;top:721px;width:125px;height:28px;background:#808080;"></div><div style="left:1470px;top:722px;width:124px;height:27px;background:#fff;"></div><div style="left:1470px;top:722px;width:123px;height:26px;background:#404040;"></div><div style="left:1471px;top:723px;width:122px;height:25px;background:#d4d0c8;"></div><div style="left:1471px;top:723px;width:121px;height:24px;background:#fff;"></div><div style="left:1568px;top:723px;width:24px;height:24px;background:#d4d0c8;border-top:1px solid #fff;border-left:1px solid #fff;box-shadow:inset -1px -1px #404040, inset -2px -2px #808080;box-sizing:border-box;"></div><svg style="position:absolute;left:1576px;top:733px" width="8" height="5"><path d="M0 0H7L3.5 4Z" fill="#000"/></svg><div class="dia" style="left:2056px;top:701px"></div><div class="lb" style="left:2069px;top:696px;">Time of observation unit discharge</div><div style="left:2059px;top:724px;width:9px;height:23px;background:#d4d0c8;"></div><div style="left:2069px;top:721px;width:105px;height:28px;background:#808080;"></div><div style="left:2070px;top:722px;width:104px;height:27px;background:#fff;"></div><div style="left:2070px;top:722px;width:103px;height:26px;background:#404040;"></div><div style="left:2071px;top:723px;width:102px;height:25px;background:#d4d0c8;"></div><div style="left:2071px;top:723px;width:101px;height:24px;background:#fff;"></div><div class="lb" style="left:2212px;top:720px;font-size:18.4px;">Enter HH:MM AM/PM/ML</div>
<div style="left:2303px;top:905px;width:217px;height:92px;background:#d4d0c8;box-shadow:inset -1px -1px #404040, inset 1px 1px #fff, inset -2px -2px #808080, inset 2px 2px #d4d0c8;"></div>
<div style="left:2306px;top:908px;width:211px;height:17px;background:linear-gradient(to right,#808080,#c0c0c0);"></div>
<div class="tw" style="left:2309px;top:911px;">DEP Watch Window - 00020101</div>
<div style="left:2504px;top:910px;width:12px;height:12px;background:#d4d0c8;box-shadow:inset -1px -1px #404040, inset 1px 1px #fff;"><svg width="12" height="12" style="position:absolute;left:0;top:0"><path d="M3 3L8 8M8 3L3 8" stroke="#000" stroke-width="1.3"/></svg></div>
<div style="left:2307px;top:926px;width:209px;height:70px;background:#808080;"></div><div style="left:2308px;top:927px;width:208px;height:69px;background:#fff;"></div><div style="left:2308px;top:927px;width:207px;height:68px;background:#404040;"></div><div style="left:2309px;top:928px;width:206px;height:67px;background:#d4d0c8;"></div><div style="left:2309px;top:928px;width:205px;height:66px;background:#fff;"></div>
<div style="left:1440px;top:995px;width:1280px;height:29px;background:#d4d0c8;border-top:1px solid #fff;box-sizing:border-box;"></div>
<div style="left:1440px;top:994px;width:1280px;height:1px;background:#d4d0c8;"></div>
<div style="left:1442px;top:998px;width:52px;height:22px;background:#d4d0c8;box-shadow:inset -1px -1px #404040, inset 1px 1px #fff, inset -2px -2px #808080;"></div>
<svg style="position:absolute;left:1446px;top:1002px" width="16" height="15" viewBox="0 0 16 15"><path d="M1 2 Q4 0 7 2 L6 7 Q3 5 0 7Z" fill="#e0401a"/><path d="M8 2 Q11 4 15 2 L14 7 Q11 9 7 7Z" fill="#3aa336"/><path d="M0 8 Q3 6 6 8 L5 13 Q2 11 -1 13Z" fill="#1f6ad6"/><path d="M7 8 Q10 10 14 8 L13 13 Q10 15 6 13Z" fill="#f4c21a"/></svg>
<div class="st" style="left:1461px;top:1003px;">Start</div>
<svg style="position:absolute;left:1502px;top:1001px" width="18" height="18"><circle cx="9.5" cy="9.5" r="6.5" fill="#2a8cea"/><circle cx="10" cy="9" r="3" fill="#fff"/><rect x="6.5" y="8.5" width="8.5" height="1.8" fill="#2a8cea"/><rect x="11.5" y="10.5" width="5" height="3" fill="#2a8cea"/><path d="M2 16 Q0 11 8 6 Q15 1 17 3" fill="none" stroke="#f0b420" stroke-width="1.6"/></svg>
<svg style="position:absolute;left:1524px;top:1001px" width="17" height="17"><circle cx="8.5" cy="8.5" r="7.5" fill="#e8701a"/><circle cx="9" cy="8" r="4.5" fill="#3b6cc8"/><path d="M2 6 Q6 1 12 3 Q8 5 9 9 Q5 12 2 6Z" fill="#f39a1d"/></svg>
<svg style="position:absolute;left:1547px;top:1002px" width="16" height="16"><rect x="1" y="1" width="14" height="14" rx="2" fill="#fff" stroke="#2a72d8" stroke-width="1.5"/><path d="M5 11 L11 5" stroke="#2a72d8" stroke-width="2"/></svg>
<div style="left:1572px;top:998px;width:122px;height:22px;background:#d4d0c8;box-shadow:inset -1px -1px #404040, inset 1px 1px #fff, inset -2px -2px #808080;"></div>
<svg style="position:absolute;left:1576px;top:1001px" width="17" height="17"><rect x="4" y="1" width="11" height="9" fill="#fff" stroke="#555"/><rect x="4" y="1" width="11" height="2" fill="#d22"/><path d="M1 12 Q3 8 7 10" stroke="#2a72d8" stroke-width="2" fill="none"/></svg>
<div class="tk" style="left:1595px;top:1004px;">Novell-delivered ...</div>
<div style="left:1697px;top:998px;width:121px;height:22px;background:#d4d0c8;box-shadow:inset -1px -1px #404040, inset 1px 1px #fff, inset -2px -2px #808080;"></div>
<svg style="position:absolute;left:1701px;top:1001px" width="17" height="17"><circle cx="8.5" cy="8.5" r="7.5" fill="#e8701a"/><circle cx="9" cy="8" r="4.5" fill="#3b6cc8"/><path d="M2 6 Q6 1 12 3 Q8 5 9 9 Q5 12 2 6Z" fill="#f39a1d"/></svg>
<div class="tk" style="left:1720px;top:1004px;">Gmail - Inbox (1)...</div>
<div style="left:1822px;top:998px;width:122px;height:22px;background:#d4d0c8;box-shadow:inset -1px -1px #404040, inset 1px 1px #fff, inset -2px -2px #808080;"></div>
<svg style="position:absolute;left:1826px;top:1001px" width="17" height="17"><circle cx="8.5" cy="8.5" r="7.5" fill="#e8701a"/><circle cx="9" cy="8" r="4.5" fill="#3b6cc8"/><path d="M2 6 Q6 1 12 3 Q8 5 9 9 Q5 12 2 6Z" fill="#f39a1d"/></svg>
<div class="tk" style="left:1845px;top:1004px;">Spider - Mozilla Fi...</div>
<div style="left:1947px;top:998px;width:122px;height:22px;background:#d4d0c8;box-shadow:inset -1px -1px #404040, inset 1px 1px #fff, inset -2px -2px #808080;"></div>
<svg style="position:absolute;left:1951px;top:1001px" width="17" height="17"><circle cx="9.5" cy="9.5" r="6.5" fill="#2a8cea"/><circle cx="10" cy="9" r="3" fill="#fff"/><rect x="6.5" y="8.5" width="8.5" height="1.8" fill="#2a8cea"/><rect x="11.5" y="10.5" width="5" height="3" fill="#2a8cea"/><path d="M2 16 Q0 11 8 6 Q15 1 17 3" fill="none" stroke="#f0b420" stroke-width="1.6"/></svg>
<div class="tk" style="left:1970px;top:1004px;">New Message - ...</div>
<div style="left:2072px;top:998px;width:121px;height:22px;background:#d4d0c8;box-shadow:inset -1px -1px #404040, inset 1px 1px #fff, inset -2px -2px #808080;"></div>
<svg style="position:absolute;left:2076px;top:1001px" width="17" height="17"><path d="M1 4 H6 L7 3 H14 V14 H1Z" fill="#f3d36b" stroke="#b08a20"/></svg>
<div class="tk" style="left:2095px;top:1004px;">PRF Screen Shots</div>
<div style="left:2197px;top:998px;width:121px;height:22px;background:#d4d0c8;box-shadow:inset -1px -1px #404040, inset 1px 1px #fff, inset -2px -2px #808080;"></div>
<svg style="position:absolute;left:2201px;top:1001px" width="17" height="17"><rect x="2" y="1" width="13" height="15" fill="#fff" stroke="#2e7d32"/><text x="4" y="13" font-size="11" font-family="Liberation Sans" font-weight="bold" fill="#2e7d32">x</text></svg>
<div class="tk" style="left:2220px;top:1004px;">Microsoft Excel - ...</div>
<div style="left:2322px;top:998px;width:121px;height:22px;background:#d4d0c8;box-shadow:inset -1px -1px #404040, inset 1px 1px #fff, inset -2px -2px #808080;"></div>
<svg style="position:absolute;left:2326px;top:1001px" width="17" height="17"><path d="M2 3 L8 1 L15 3 L13 9 L8 15 L3 9Z" fill="#f5d020" stroke="#c01010" stroke-width="1.2"/><path d="M5 6 Q8 4 11 6 Q8 8 6 10" stroke="#c01010" stroke-width="1.4" fill="none"/></svg>
<div class="tk" style="left:2345px;top:1004px;">WBT - TMOUSER...</div>
<div style="left:2447px;top:998px;width:121px;height:22px;background:#e8e6e1;box-shadow:inset 1px 1px #404040, inset -1px -1px #fff, inset 2px 2px #808080;"></div>
<svg style="position:absolute;left:2451px;top:1001px" width="17" height="17"><rect x="3" y="1" width="12" height="15" fill="#fff" stroke="#5b7fc0"/><rect x="1" y="3" width="10" height="8" fill="#2b5aa8"/><text x="2" y="10" font-size="7" font-family="Liberation Sans" font-weight="bold" fill="#fff">W</text></svg>
<div class="tk b" style="left:2470px;top:1004px;">snapshots of e...</div>
<svg style="position:absolute;left:2579px;top:1002px" width="17" height="17"><rect x="1" y="1" width="14" height="13" rx="2" fill="#ffffc0" stroke="#000"/><path d="M4 14 L4 17 L8 14" fill="#ffffc0" stroke="#000"/><text x="4" y="12" font-size="11" font-weight="bold" font-family="Liberation Sans" fill="#000">?</text></svg>
<div style="left:2600px;top:999px;width:1px;height:21px;background:#808080;"></div>
<div style="left:2601px;top:999px;width:1px;height:21px;background:#fff;"></div>
<svg style="position:absolute;left:2606px;top:1001px" width="12" height="18"><rect x="3" y="1" width="6" height="4" fill="none" stroke="#000"/><rect x="1" y="3" width="6" height="4" fill="#d4d0c8" stroke="#000"/><path d="M2 12 H9 L5.5 15Z" fill="#000"/></svg>
<div style="left:2623px;top:998px;width:95px;height:24px;border:1px solid;border-color:#808080 #fff #fff #808080;box-sizing:border-box;"></div>
<div class="tk b" style="left:2631px;top:1003px;">&laquo;</div>
<svg style="position:absolute;left:2641px;top:1002px" width="17" height="17"><path d="M5 0.5H12L16.5 5V12L12 16.5H5L0.5 12V5Z" fill="#0a10e8"/><path d="M1 9 H4 Q5 4 6 9 Q7 13 8 6 Q9 2 10 9 Q11 12 12 9 H16" stroke="#f0e020" stroke-width="1.1" fill="none"/></svg>
<div class="tk" style="left:2664px;top:1005px;">12:52 PM</div>
</body></html>
